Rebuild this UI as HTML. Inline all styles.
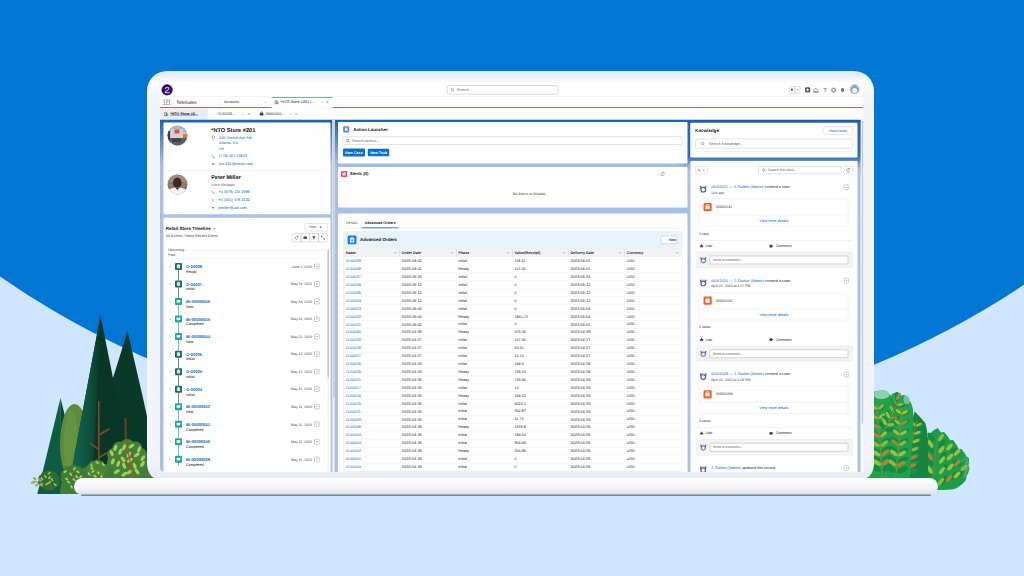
<!DOCTYPE html>
<html><head><meta charset="utf-8">
<style>
*{box-sizing:border-box;margin:0;padding:0}
html,body{width:1024px;height:576px;overflow:hidden;background:#cfe6fe;font-family:"Liberation Sans",sans-serif;text-rendering:geometricPrecision;-webkit-font-smoothing:antialiased;}
.abs{position:absolute}
svg.l{position:absolute;left:0;top:0;width:1024px;height:576px;overflow:visible}
</style></head><body>
<svg class="l" viewBox="0 0 1024 576">
<defs>
<linearGradient id="bezel" x1="0" y1="0" x2="0" y2="1"><stop offset="0" stop-color="#dbe8fa"/><stop offset="0.012" stop-color="#eaf1fc"/><stop offset="0.027" stop-color="#fafbff"/><stop offset="0.07" stop-color="#f2f4fb"/><stop offset="0.95" stop-color="#f2f4fb"/><stop offset="1" stop-color="#e8ebf2"/></linearGradient>
<linearGradient id="base" x1="0" y1="0" x2="0" y2="1"><stop offset="0" stop-color="#ffffff"/><stop offset="0.55" stop-color="#f3f4f8"/><stop offset="0.9" stop-color="#e3e5eb"/><stop offset="1" stop-color="#c9cdd6"/></linearGradient>
</defs>
<rect width="1024" height="576" fill="#cfe6fe"/>
<ellipse cx="518" cy="-308" rx="839" ry="743" fill="#0176d3"/>
<path d="M127.600 331 C134 360 144 400 152 440 L152 494 L100 494 L113 378 Z" fill="#0a3929"/><path d="M60.500 398 L37.300 494 L62 494 Z" fill="#0f5c46"/><path d="M60.500 398 L61.500 494 L84 494 Z" fill="#0b4535"/><ellipse cx="74.500" cy="444" rx="14.500" ry="40" fill="#5e8b3b"/><ellipse cx="71" cy="446" rx="7" ry="36" fill="#6c9a47" opacity="0.55"/><path d="M100.500 315.600 L67.200 494 L140 494 L113 378 Z" fill="#0a3627"/><linearGradient id="t1" gradientUnits="userSpaceOnUse" x1="72" y1="0" x2="100" y2="0"><stop offset="0" stop-color="#15654c"/><stop offset="0.55" stop-color="#0f5440"/><stop offset="1" stop-color="#0a3a2a"/></linearGradient><path d="M100.500 315.600 L67.200 494 L92 494 C94 440 99 370 100.500 315.600 Z" fill="url(#t1)"/><path d="M98.700 401.500 L98.900 462 M99 435 L109 429 M90.700 443.400 L98.700 449.500 M108.200 452 L99 457.700" stroke="#8a4a29" stroke-width="1.500" fill="none" stroke-linecap="round"/><path d="M125.400 418.600 L125.800 442" stroke="#7a3f22" stroke-width="1.800" stroke-linecap="round"/>
<path d="M60 494 C60 480 66 474 76 473 C84 466 92 464 100 466 C108 462 130 462 158 464 L158 494 Z" fill="#437d3a"/><ellipse cx="127.3" cy="459.5" rx="19" ry="18.1" fill="#467f3b"/><circle cx="114.4" cy="455.0" r="7.2" fill="#467f3b"/><circle cx="119.5" cy="448.6" r="7.2" fill="#467f3b"/><circle cx="127.3" cy="446.2" r="7.2" fill="#467f3b"/><circle cx="135.1" cy="448.6" r="7.2" fill="#467f3b"/><circle cx="140.2" cy="455.0" r="7.2" fill="#467f3b"/><circle cx="114.1" cy="462.9" r="7.2" fill="#467f3b"/><circle cx="140.5" cy="462.9" r="7.2" fill="#467f3b"/><path d="M133.0 476.6 L125.4 448.1 M129.6 465.2 L116.8 458.6 M128.2 459.5 L136.8 452.9" stroke="#8f5a2e" stroke-width="1.04" opacity="0.8" fill="none" stroke-linecap="round"/><ellipse cx="124.1" cy="465.7" rx="3.23" ry="1.62" fill="#9fd257" transform="rotate(70 124.1 465.7)"/><ellipse cx="142.5" cy="464.0" rx="3.23" ry="1.62" fill="#9fd257" transform="rotate(-55 142.5 464.0)"/><ellipse cx="123.0" cy="459.3" rx="3.23" ry="1.62" fill="#9fd257" transform="rotate(55 123.0 459.3)"/><ellipse cx="111.7" cy="453.0" rx="3.23" ry="1.62" fill="#9fd257" transform="rotate(70 111.7 453.0)"/><ellipse cx="115.4" cy="447.9" rx="3.23" ry="1.62" fill="#9fd257" transform="rotate(-70 115.4 447.9)"/><ellipse cx="129.7" cy="471.8" rx="3.23" ry="1.62" fill="#9fd257" transform="rotate(-35 129.7 471.8)"/><ellipse cx="134.7" cy="465.9" rx="3.23" ry="1.62" fill="#9fd257" transform="rotate(70 134.7 465.9)"/><ellipse cx="120.3" cy="451.6" rx="3.23" ry="1.62" fill="#9fd257" transform="rotate(-70 120.3 451.6)"/><ellipse cx="124.2" cy="447.2" rx="3.23" ry="1.62" fill="#9fd257" transform="rotate(-70 124.2 447.2)"/><ellipse cx="118.3" cy="463.7" rx="3.23" ry="1.62" fill="#9fd257" transform="rotate(-70 118.3 463.7)"/><ellipse cx="136.8" cy="454.8" rx="3.23" ry="1.62" fill="#9fd257" transform="rotate(-35 136.8 454.8)"/><ellipse cx="131.4" cy="446.1" rx="3.23" ry="1.62" fill="#9fd257" transform="rotate(-35 131.4 446.1)"/><ellipse cx="128.8" cy="454.7" rx="3.23" ry="1.62" fill="#9fd257" transform="rotate(-55 128.8 454.7)"/><ellipse cx="139.1" cy="449.4" rx="3.23" ry="1.62" fill="#9fd257" transform="rotate(-70 139.1 449.4)"/><ellipse cx="116.9" cy="471.7" rx="3.23" ry="1.62" fill="#9fd257" transform="rotate(-35 116.9 471.7)"/><ellipse cx="129.9" cy="460.3" rx="3.23" ry="1.62" fill="#9fd257" transform="rotate(-35 129.9 460.3)"/><ellipse cx="112.8" cy="461.4" rx="3.23" ry="1.62" fill="#9fd257" transform="rotate(-70 112.8 461.4)"/><ellipse cx="137.0" cy="471.6" rx="3.23" ry="1.62" fill="#9fd257" transform="rotate(55 137.0 471.6)"/><ellipse cx="142.8" cy="458.1" rx="3.23" ry="1.62" fill="#9fd257" transform="rotate(-55 142.8 458.1)"/><ellipse cx="124.4" cy="474.2" rx="3.23" ry="1.62" fill="#9fd257" transform="rotate(-35 124.4 474.2)"/><path d="M125.800 441 L133 476" stroke="#9a5a2e" stroke-width="1.200"/><ellipse cx="96.8" cy="470" rx="9.5" ry="9.0" fill="#47863b"/><circle cx="90.4" cy="467.7" r="3.6" fill="#47863b"/><circle cx="92.9" cy="464.6" r="3.6" fill="#47863b"/><circle cx="96.8" cy="463.4" r="3.6" fill="#47863b"/><circle cx="100.7" cy="464.6" r="3.6" fill="#47863b"/><circle cx="103.2" cy="467.7" r="3.6" fill="#47863b"/><circle cx="90.2" cy="471.7" r="3.6" fill="#47863b"/><circle cx="103.4" cy="471.7" r="3.6" fill="#47863b"/><path d="M99.6 478.6 L95.8 464.3 M97.9 472.9 L91.6 469.5 M97.3 470 L101.5 466.7" stroke="#8f5a2e" stroke-width="0.60" opacity="0.8" fill="none" stroke-linecap="round"/><ellipse cx="92.0" cy="468.4" rx="1.90" ry="0.95" fill="#9fd257" transform="rotate(55 92.0 468.4)"/><ellipse cx="103.3" cy="464.5" rx="1.90" ry="0.95" fill="#9fd257" transform="rotate(35 103.3 464.5)"/><ellipse cx="89.1" cy="473.9" rx="1.90" ry="0.95" fill="#9fd257" transform="rotate(55 89.1 473.9)"/><ellipse cx="98.4" cy="472.9" rx="1.90" ry="0.95" fill="#9fd257" transform="rotate(55 98.4 472.9)"/><ellipse cx="91.5" cy="465.3" rx="1.90" ry="0.95" fill="#9fd257" transform="rotate(70 91.5 465.3)"/><ellipse cx="97.3" cy="462.6" rx="1.90" ry="0.95" fill="#9fd257" transform="rotate(35 97.3 462.6)"/><ellipse cx="95.0" cy="476.1" rx="1.90" ry="0.95" fill="#9fd257" transform="rotate(35 95.0 476.1)"/><ellipse cx="93.1" cy="471.4" rx="1.90" ry="0.95" fill="#9fd257" transform="rotate(-35 93.1 471.4)"/><ellipse cx="101.5" cy="476.4" rx="1.90" ry="0.95" fill="#9fd257" transform="rotate(-70 101.5 476.4)"/><ellipse cx="73" cy="477" rx="11.5" ry="10.9" fill="#3f7d37"/><circle cx="65.2" cy="474.2" r="4.4" fill="#3f7d37"/><circle cx="68.3" cy="470.4" r="4.4" fill="#3f7d37"/><circle cx="73.0" cy="468.9" r="4.4" fill="#3f7d37"/><circle cx="77.7" cy="470.4" r="4.4" fill="#3f7d37"/><circle cx="80.8" cy="474.2" r="4.4" fill="#3f7d37"/><circle cx="65.0" cy="479.1" r="4.4" fill="#3f7d37"/><circle cx="81.0" cy="479.1" r="4.4" fill="#3f7d37"/><path d="M76.5 487.4 L71.8 470.1 M74.4 480.4 L66.7 476.4 M73.6 477 L78.8 473.0" stroke="#8f5a2e" stroke-width="0.63" opacity="0.8" fill="none" stroke-linecap="round"/><ellipse cx="74.2" cy="479.7" rx="1.96" ry="0.98" fill="#a4d65e" transform="rotate(35 74.2 479.7)"/><ellipse cx="80.6" cy="476.7" rx="1.96" ry="0.98" fill="#a4d65e" transform="rotate(-35 80.6 476.7)"/><ellipse cx="70.8" cy="474.2" rx="1.96" ry="0.98" fill="#a4d65e" transform="rotate(55 70.8 474.2)"/><ellipse cx="76.7" cy="476.8" rx="1.96" ry="0.98" fill="#a4d65e" transform="rotate(55 76.7 476.8)"/><ellipse cx="66.7" cy="479.0" rx="1.96" ry="0.98" fill="#a4d65e" transform="rotate(35 66.7 479.0)"/><ellipse cx="65.2" cy="471.6" rx="1.96" ry="0.98" fill="#a4d65e" transform="rotate(-35 65.2 471.6)"/><ellipse cx="77.8" cy="471.9" rx="1.96" ry="0.98" fill="#a4d65e" transform="rotate(35 77.8 471.9)"/><ellipse cx="74.4" cy="468.8" rx="1.96" ry="0.98" fill="#a4d65e" transform="rotate(-55 74.4 468.8)"/><ellipse cx="79.5" cy="481.8" rx="1.96" ry="0.98" fill="#a4d65e" transform="rotate(-70 79.5 481.8)"/><ellipse cx="71.6" cy="486.9" rx="1.96" ry="0.98" fill="#a4d65e" transform="rotate(70 71.6 486.9)"/><ellipse cx="68.7" cy="482.2" rx="1.96" ry="0.98" fill="#a4d65e" transform="rotate(35 68.7 482.2)"/><ellipse cx="49" cy="481" rx="10" ry="9.5" fill="#2f6b36"/><circle cx="42.2" cy="478.6" r="3.8" fill="#2f6b36"/><circle cx="44.9" cy="475.3" r="3.8" fill="#2f6b36"/><circle cx="49.0" cy="474.0" r="3.8" fill="#2f6b36"/><circle cx="53.1" cy="475.3" r="3.8" fill="#2f6b36"/><circle cx="55.8" cy="478.6" r="3.8" fill="#2f6b36"/><circle cx="42.0" cy="482.8" r="3.8" fill="#2f6b36"/><circle cx="56.0" cy="482.8" r="3.8" fill="#2f6b36"/><path d="M52.0 490.0 L48.0 475.0 M50.2 484.0 L43.5 480.5 M49.5 481 L54.0 477.5" stroke="#8f5a2e" stroke-width="0.60" opacity="0.8" fill="none" stroke-linecap="round"/><ellipse cx="45.4" cy="476.6" rx="1.90" ry="0.95" fill="#8fc652" transform="rotate(55 45.4 476.6)"/><ellipse cx="49.5" cy="482.4" rx="1.90" ry="0.95" fill="#8fc652" transform="rotate(-35 49.5 482.4)"/><ellipse cx="41.6" cy="484.7" rx="1.90" ry="0.95" fill="#8fc652" transform="rotate(55 41.6 484.7)"/><ellipse cx="49.5" cy="477.6" rx="1.90" ry="0.95" fill="#8fc652" transform="rotate(-55 49.5 477.6)"/><ellipse cx="42.0" cy="478.8" rx="1.90" ry="0.95" fill="#8fc652" transform="rotate(55 42.0 478.8)"/><ellipse cx="55.2" cy="484.7" rx="1.90" ry="0.95" fill="#8fc652" transform="rotate(35 55.2 484.7)"/><ellipse cx="46.7" cy="484.0" rx="1.90" ry="0.95" fill="#8fc652" transform="rotate(-35 46.7 484.0)"/><ellipse cx="52.0" cy="479.6" rx="1.90" ry="0.95" fill="#8fc652" transform="rotate(55 52.0 479.6)"/><ellipse cx="49.2" cy="473.2" rx="1.90" ry="0.95" fill="#8fc652" transform="rotate(-35 49.2 473.2)"/><path d="M33 481 L45 484" stroke="#7a5a30" stroke-width="0.7"/><ellipse cx="34.8" cy="478.7" rx="2.300" ry="1.100" fill="#86b85a" transform="rotate(30 34.8 478.7)"/><ellipse cx="32.9" cy="482.6" rx="2.300" ry="1.100" fill="#86b85a" transform="rotate(-10 32.9 482.6)"/><ellipse cx="36.7" cy="485" rx="2.300" ry="1.100" fill="#86b85a" transform="rotate(-35 36.7 485)"/><ellipse cx="40" cy="480" rx="2.300" ry="1.100" fill="#86b85a" transform="rotate(40 40 480)"/><ellipse cx="41" cy="484.5" rx="2.300" ry="1.100" fill="#86b85a" transform="rotate(-30 41 484.5)"/>
<path d="M925 489 L926 440 C928 435 933 430 937.700 428 L941 432.500 L944 432 C947 435 949 438 950.200 440.300 L953 440 C955.500 443 957.500 446 958.700 449 L961.500 449 C963.500 451.500 965.500 454 966.400 456.600 L969 458 C969.300 460.500 969 463 968.300 465 L969.500 468 C969 471 968 474 966.400 476.600 L966 480 C964 482.500 962 484.500 959.700 486 L956 488.500 C953 489.500 951 489.500 950 489.500 C940 490.500 932 490 925 489 Z" fill="#1f9c49"/><path d="M966 458 l3 0.500 l-1 3 l2 2 l-1.500 3 l1 3 l-2.500 3 l0 3 l-4 3 z" fill="#5bb98a" opacity="0.5"/><ellipse cx="931.0" cy="437.0" rx="5.00" ry="2.30" fill="#178a42" transform="rotate(55 931.0 437.0)"/><ellipse cx="930.0" cy="449.0" rx="5.00" ry="2.30" fill="#178a42" transform="rotate(55 930.0 449.0)"/><ellipse cx="930.0" cy="462.0" rx="5.00" ry="2.30" fill="#178a42" transform="rotate(55 930.0 462.0)"/><ellipse cx="931.0" cy="476.0" rx="5.00" ry="2.30" fill="#178a42" transform="rotate(55 931.0 476.0)"/><ellipse cx="942.0" cy="444.0" rx="5.00" ry="2.30" fill="#178a42" transform="rotate(-55 942.0 444.0)"/><ellipse cx="943.0" cy="456.0" rx="5.00" ry="2.30" fill="#178a42" transform="rotate(-55 943.0 456.0)"/><ellipse cx="944.0" cy="468.0" rx="5.00" ry="2.30" fill="#178a42" transform="rotate(-55 944.0 468.0)"/><ellipse cx="944.0" cy="480.0" rx="5.00" ry="2.30" fill="#178a42" transform="rotate(-55 944.0 480.0)"/><ellipse cx="953.0" cy="452.0" rx="5.00" ry="2.30" fill="#178a42" transform="rotate(-55 953.0 452.0)"/><ellipse cx="954.0" cy="464.0" rx="5.00" ry="2.30" fill="#178a42" transform="rotate(-55 954.0 464.0)"/><ellipse cx="954.0" cy="476.0" rx="5.00" ry="2.30" fill="#178a42" transform="rotate(-55 954.0 476.0)"/><ellipse cx="961.0" cy="462.0" rx="5.00" ry="2.30" fill="#178a42" transform="rotate(-55 961.0 462.0)"/><ellipse cx="961.0" cy="473.0" rx="5.00" ry="2.30" fill="#178a42" transform="rotate(-55 961.0 473.0)"/><path d="M933 480 L936.800 438" stroke="#7d8a35" stroke-width="0.9" fill="none"/><ellipse cx="930.5" cy="444.0" rx="4.30" ry="1.90" fill="#97c23f" transform="rotate(60 930.5 444.0)"/><ellipse cx="930.0" cy="456.5" rx="4.30" ry="1.90" fill="#a8873b" transform="rotate(60 930.0 456.5)"/><ellipse cx="930.0" cy="470.0" rx="4.30" ry="1.90" fill="#97c23f" transform="rotate(60 930.0 470.0)"/><ellipse cx="931.0" cy="483.0" rx="4.30" ry="1.90" fill="#8aba3d" transform="rotate(60 931.0 483.0)"/><ellipse cx="941.0" cy="437.5" rx="4.30" ry="1.90" fill="#8aba3d" transform="rotate(-55 941.0 437.5)"/><ellipse cx="941.5" cy="449.5" rx="4.30" ry="1.90" fill="#97c23f" transform="rotate(-55 941.5 449.5)"/><ellipse cx="942.0" cy="460.0" rx="4.30" ry="1.90" fill="#97c23f" transform="rotate(-55 942.0 460.0)"/><ellipse cx="942.0" cy="470.5" rx="4.30" ry="1.90" fill="#97c23f" transform="rotate(-55 942.0 470.5)"/><ellipse cx="941.0" cy="481.5" rx="4.30" ry="1.90" fill="#8aba3d" transform="rotate(-55 941.0 481.5)"/><ellipse cx="949.5" cy="447.0" rx="4.30" ry="1.90" fill="#97c23f" transform="rotate(-50 949.5 447.0)"/><ellipse cx="950.0" cy="457.0" rx="4.30" ry="1.90" fill="#97c23f" transform="rotate(-50 950.0 457.0)"/><ellipse cx="950.5" cy="467.0" rx="4.30" ry="1.90" fill="#97c23f" transform="rotate(-50 950.5 467.0)"/><ellipse cx="949.0" cy="478.5" rx="4.30" ry="1.90" fill="#a8873b" transform="rotate(-50 949.0 478.5)"/><ellipse cx="957.0" cy="452.5" rx="4.30" ry="1.90" fill="#97c23f" transform="rotate(-45 957.0 452.5)"/><ellipse cx="957.5" cy="463.0" rx="4.30" ry="1.90" fill="#a8873b" transform="rotate(-45 957.5 463.0)"/><ellipse cx="957.0" cy="475.0" rx="4.30" ry="1.90" fill="#97c23f" transform="rotate(-45 957.0 475.0)"/><ellipse cx="963.5" cy="459.5" rx="4.30" ry="1.90" fill="#2aa556" transform="rotate(-40 963.5 459.5)"/><ellipse cx="964.0" cy="468.0" rx="4.30" ry="1.90" fill="#8aba3d" transform="rotate(-40 964.0 468.0)"/><path d="M900 480 C904 452 909 428 914.800 411.500 C918 415 922 419 925.300 423.200 C927.500 429 928 440 928 450 L928 480 Z" fill="#17853f"/><ellipse cx="901.7" cy="469.0" rx="5.73" ry="2.58" fill="#1b9447" transform="rotate(-139 901.7 469.0)"/><ellipse cx="912.4" cy="471.2" rx="5.73" ry="2.58" fill="#1b9447" transform="rotate(-19 912.4 471.2)"/><ellipse cx="903.5" cy="461.5" rx="5.43" ry="2.44" fill="#1b9447" transform="rotate(-139 903.5 461.5)"/><ellipse cx="913.6" cy="463.5" rx="5.43" ry="2.44" fill="#1b9447" transform="rotate(-19 913.6 463.5)"/><ellipse cx="905.3" cy="454.0" rx="5.12" ry="2.30" fill="#1b9447" transform="rotate(-139 905.3 454.0)"/><ellipse cx="914.8" cy="455.9" rx="5.12" ry="2.30" fill="#1b9447" transform="rotate(-19 914.8 455.9)"/><ellipse cx="907.1" cy="446.5" rx="4.82" ry="2.17" fill="#1b9447" transform="rotate(-139 907.1 446.5)"/><ellipse cx="916.1" cy="448.3" rx="4.82" ry="2.17" fill="#1b9447" transform="rotate(-19 916.1 448.3)"/><ellipse cx="908.9" cy="439.0" rx="4.51" ry="2.03" fill="#1b9447" transform="rotate(-139 908.9 439.0)"/><ellipse cx="917.3" cy="440.7" rx="4.51" ry="2.03" fill="#1b9447" transform="rotate(-19 917.3 440.7)"/><ellipse cx="910.7" cy="431.5" rx="4.21" ry="1.89" fill="#1b9447" transform="rotate(-139 910.7 431.5)"/><ellipse cx="918.6" cy="433.1" rx="4.21" ry="1.89" fill="#1b9447" transform="rotate(-19 918.6 433.1)"/><ellipse cx="912.5" cy="424.0" rx="3.90" ry="1.76" fill="#1b9447" transform="rotate(-139 912.5 424.0)"/><ellipse cx="919.8" cy="425.5" rx="3.90" ry="1.76" fill="#1b9447" transform="rotate(-19 919.8 425.5)"/><path d="M905 478 L916.5 421" stroke="#8e8a35" stroke-width="0.9" fill="none" stroke-linecap="round"/><ellipse cx="903.5" cy="464.1" rx="4.48" ry="1.88" fill="#97c23f" transform="rotate(-134 903.5 464.1)"/><ellipse cx="911.8" cy="465.8" rx="4.48" ry="1.88" fill="#a8873b" transform="rotate(-24 911.8 465.8)"/><ellipse cx="905.4" cy="455.9" rx="4.21" ry="1.77" fill="#97c23f" transform="rotate(-134 905.4 455.9)"/><ellipse cx="913.2" cy="457.5" rx="4.21" ry="1.77" fill="#a8873b" transform="rotate(-24 913.2 457.5)"/><ellipse cx="907.3" cy="447.8" rx="3.95" ry="1.66" fill="#8aba3d" transform="rotate(-134 907.3 447.8)"/><ellipse cx="914.6" cy="449.3" rx="3.95" ry="1.66" fill="#8aba3d" transform="rotate(-24 914.6 449.3)"/><ellipse cx="909.2" cy="439.7" rx="3.69" ry="1.55" fill="#a8873b" transform="rotate(-134 909.2 439.7)"/><ellipse cx="916.0" cy="441.0" rx="3.69" ry="1.55" fill="#97c23f" transform="rotate(-24 916.0 441.0)"/><ellipse cx="911.1" cy="431.5" rx="3.42" ry="1.44" fill="#a8873b" transform="rotate(-134 911.1 431.5)"/><ellipse cx="917.4" cy="432.8" rx="3.42" ry="1.44" fill="#97c23f" transform="rotate(-24 917.4 432.8)"/><ellipse cx="913.0" cy="423.4" rx="3.16" ry="1.33" fill="#8aba3d" transform="rotate(-134 913.0 423.4)"/><ellipse cx="918.8" cy="424.6" rx="3.16" ry="1.33" fill="#97c23f" transform="rotate(-24 918.8 424.6)"/><path d="M858 480 L858 398 C866 393 878 390.500 882.400 390 C886 390.300 889 392.500 891 396 C893 393.500 895.500 392 897.700 391.700 L900.500 395.500 L904 395 C906 395.500 907.500 396.500 908.200 397.400 C910.500 401 912.300 405 913 409.800 C914 420 912 450 910 480 Z" fill="#22a04c"/><path d="M897.700 391.700 C899.500 397 899 404 896 410 L890.500 399 C892.500 395.500 895 393 897.700 391.700Z" fill="#178a41"/><ellipse cx="875.6" cy="468.1" rx="6.26" ry="2.82" fill="#178a42" transform="rotate(-154 875.6 468.1)"/><ellipse cx="887.5" cy="467.3" rx="6.26" ry="2.82" fill="#178a42" transform="rotate(-34 887.5 467.3)"/><ellipse cx="875.3" cy="459.5" rx="6.03" ry="2.71" fill="#178a42" transform="rotate(-154 875.3 459.5)"/><ellipse cx="886.7" cy="458.7" rx="6.03" ry="2.71" fill="#178a42" transform="rotate(-34 886.7 458.7)"/><ellipse cx="874.9" cy="450.9" rx="5.79" ry="2.61" fill="#178a42" transform="rotate(-154 874.9 450.9)"/><ellipse cx="885.9" cy="450.2" rx="5.79" ry="2.61" fill="#178a42" transform="rotate(-34 885.9 450.2)"/><ellipse cx="874.6" cy="442.4" rx="5.56" ry="2.50" fill="#178a42" transform="rotate(-154 874.6 442.4)"/><ellipse cx="885.1" cy="441.7" rx="5.56" ry="2.50" fill="#178a42" transform="rotate(-34 885.1 441.7)"/><ellipse cx="874.2" cy="433.8" rx="5.32" ry="2.39" fill="#178a42" transform="rotate(-154 874.2 433.8)"/><ellipse cx="884.3" cy="433.1" rx="5.32" ry="2.39" fill="#178a42" transform="rotate(-34 884.3 433.1)"/><ellipse cx="873.8" cy="425.2" rx="5.09" ry="2.29" fill="#178a42" transform="rotate(-154 873.8 425.2)"/><ellipse cx="883.5" cy="424.6" rx="5.09" ry="2.29" fill="#178a42" transform="rotate(-34 883.5 424.6)"/><ellipse cx="873.5" cy="416.7" rx="4.85" ry="2.18" fill="#178a42" transform="rotate(-154 873.5 416.7)"/><ellipse cx="882.7" cy="416.0" rx="4.85" ry="2.18" fill="#178a42" transform="rotate(-34 882.7 416.0)"/><ellipse cx="873.1" cy="408.1" rx="4.62" ry="2.08" fill="#178a42" transform="rotate(-154 873.1 408.1)"/><ellipse cx="881.9" cy="407.5" rx="4.62" ry="2.08" fill="#178a42" transform="rotate(-34 881.9 407.5)"/><path d="M882.4 478 L877.4 404" stroke="#8e8a35" stroke-width="0.9" fill="none" stroke-linecap="round"/><ellipse cx="876.7" cy="462.5" rx="4.93" ry="2.07" fill="#97c23f" transform="rotate(-149 876.7 462.5)"/><ellipse cx="886.0" cy="461.8" rx="4.93" ry="2.07" fill="#a8873b" transform="rotate(-39 886.0 461.8)"/><ellipse cx="876.3" cy="453.3" rx="4.73" ry="1.99" fill="#97c23f" transform="rotate(-149 876.3 453.3)"/><ellipse cx="885.2" cy="452.7" rx="4.73" ry="1.99" fill="#a8873b" transform="rotate(-39 885.2 452.7)"/><ellipse cx="875.8" cy="444.1" rx="4.53" ry="1.90" fill="#8aba3d" transform="rotate(-149 875.8 444.1)"/><ellipse cx="884.3" cy="443.5" rx="4.53" ry="1.90" fill="#8aba3d" transform="rotate(-39 884.3 443.5)"/><ellipse cx="875.4" cy="434.9" rx="4.32" ry="1.82" fill="#a8873b" transform="rotate(-149 875.4 434.9)"/><ellipse cx="883.5" cy="434.4" rx="4.32" ry="1.82" fill="#97c23f" transform="rotate(-39 883.5 434.4)"/><ellipse cx="875.0" cy="425.7" rx="4.12" ry="1.73" fill="#a8873b" transform="rotate(-149 875.0 425.7)"/><ellipse cx="882.7" cy="425.2" rx="4.12" ry="1.73" fill="#97c23f" transform="rotate(-39 882.7 425.2)"/><ellipse cx="874.5" cy="416.6" rx="3.92" ry="1.65" fill="#8aba3d" transform="rotate(-149 874.5 416.6)"/><ellipse cx="881.9" cy="416.1" rx="3.92" ry="1.65" fill="#97c23f" transform="rotate(-39 881.9 416.1)"/><ellipse cx="874.1" cy="407.4" rx="3.72" ry="1.56" fill="#97c23f" transform="rotate(-149 874.1 407.4)"/><ellipse cx="881.1" cy="406.9" rx="3.72" ry="1.56" fill="#8aba3d" transform="rotate(-39 881.1 406.9)"/><ellipse cx="882.2" cy="425.5" rx="4.88" ry="2.19" fill="#178a42" transform="rotate(-123 882.2 425.5)"/><ellipse cx="890.4" cy="429.7" rx="4.88" ry="2.19" fill="#178a42" transform="rotate(-3 890.4 429.7)"/><ellipse cx="885.4" cy="419.7" rx="4.62" ry="2.08" fill="#178a42" transform="rotate(-123 885.4 419.7)"/><ellipse cx="893.2" cy="423.7" rx="4.62" ry="2.08" fill="#178a42" transform="rotate(-3 893.2 423.7)"/><ellipse cx="888.6" cy="414.0" rx="4.38" ry="1.97" fill="#178a42" transform="rotate(-123 888.6 414.0)"/><ellipse cx="896.0" cy="417.7" rx="4.38" ry="1.97" fill="#178a42" transform="rotate(-3 896.0 417.7)"/><ellipse cx="891.8" cy="408.2" rx="4.12" ry="1.86" fill="#178a42" transform="rotate(-123 891.8 408.2)"/><ellipse cx="898.8" cy="411.8" rx="4.12" ry="1.86" fill="#178a42" transform="rotate(-3 898.8 411.8)"/><ellipse cx="895.0" cy="402.4" rx="3.88" ry="1.74" fill="#178a42" transform="rotate(-123 895.0 402.4)"/><ellipse cx="901.5" cy="405.8" rx="3.88" ry="1.74" fill="#178a42" transform="rotate(-3 901.5 405.8)"/><path d="M880.5 437 L898.8 401" stroke="#8e8a35" stroke-width="0.9" fill="none" stroke-linecap="round"/><ellipse cx="884.4" cy="421.4" rx="3.81" ry="1.60" fill="#97c23f" transform="rotate(-118 884.4 421.4)"/><ellipse cx="890.8" cy="424.7" rx="3.81" ry="1.60" fill="#8aba3d" transform="rotate(-8 890.8 424.7)"/><ellipse cx="887.9" cy="414.9" rx="3.58" ry="1.51" fill="#97c23f" transform="rotate(-118 887.9 414.9)"/><ellipse cx="894.0" cy="418.0" rx="3.58" ry="1.51" fill="#a8873b" transform="rotate(-8 894.0 418.0)"/><ellipse cx="891.5" cy="408.4" rx="3.36" ry="1.41" fill="#8aba3d" transform="rotate(-118 891.5 408.4)"/><ellipse cx="897.1" cy="411.3" rx="3.36" ry="1.41" fill="#97c23f" transform="rotate(-8 897.1 411.3)"/><ellipse cx="895.0" cy="401.9" rx="3.13" ry="1.32" fill="#a8873b" transform="rotate(-118 895.0 401.9)"/><ellipse cx="900.3" cy="404.5" rx="3.13" ry="1.32" fill="#97c23f" transform="rotate(-8 900.3 404.5)"/><ellipse cx="890.9" cy="468.9" rx="6.03" ry="2.71" fill="#178a42" transform="rotate(-145 890.9 468.9)"/><ellipse cx="902.3" cy="469.9" rx="6.03" ry="2.71" fill="#178a42" transform="rotate(-25 902.3 469.9)"/><ellipse cx="892.0" cy="459.4" rx="5.73" ry="2.58" fill="#178a42" transform="rotate(-145 892.0 459.4)"/><ellipse cx="902.9" cy="460.4" rx="5.73" ry="2.58" fill="#178a42" transform="rotate(-25 902.9 460.4)"/><ellipse cx="893.2" cy="450.0" rx="5.44" ry="2.45" fill="#178a42" transform="rotate(-145 893.2 450.0)"/><ellipse cx="903.5" cy="450.9" rx="5.44" ry="2.45" fill="#178a42" transform="rotate(-25 903.5 450.9)"/><ellipse cx="894.3" cy="440.5" rx="5.15" ry="2.32" fill="#178a42" transform="rotate(-145 894.3 440.5)"/><ellipse cx="904.1" cy="441.4" rx="5.15" ry="2.32" fill="#178a42" transform="rotate(-25 904.1 441.4)"/><ellipse cx="895.4" cy="431.0" rx="4.86" ry="2.19" fill="#178a42" transform="rotate(-145 895.4 431.0)"/><ellipse cx="904.7" cy="431.9" rx="4.86" ry="2.19" fill="#178a42" transform="rotate(-25 904.7 431.9)"/><ellipse cx="896.6" cy="421.6" rx="4.56" ry="2.05" fill="#178a42" transform="rotate(-145 896.6 421.6)"/><ellipse cx="905.2" cy="422.4" rx="4.56" ry="2.05" fill="#178a42" transform="rotate(-25 905.2 422.4)"/><ellipse cx="897.7" cy="412.1" rx="4.27" ry="1.92" fill="#178a42" transform="rotate(-145 897.7 412.1)"/><ellipse cx="905.8" cy="412.9" rx="4.27" ry="1.92" fill="#178a42" transform="rotate(-25 905.8 412.9)"/><path d="M896 474 L902 408" stroke="#8e8a35" stroke-width="0.9" fill="none" stroke-linecap="round"/><ellipse cx="892.5" cy="463.0" rx="4.72" ry="1.98" fill="#8aba3d" transform="rotate(-140 892.5 463.0)"/><ellipse cx="901.4" cy="463.8" rx="4.72" ry="1.98" fill="#a8873b" transform="rotate(-30 901.4 463.8)"/><ellipse cx="893.7" cy="452.8" rx="4.47" ry="1.88" fill="#97c23f" transform="rotate(-140 893.7 452.8)"/><ellipse cx="902.1" cy="453.5" rx="4.47" ry="1.88" fill="#97c23f" transform="rotate(-30 902.1 453.5)"/><ellipse cx="894.9" cy="442.5" rx="4.21" ry="1.77" fill="#a8873b" transform="rotate(-140 894.9 442.5)"/><ellipse cx="902.8" cy="443.2" rx="4.21" ry="1.77" fill="#8aba3d" transform="rotate(-30 902.8 443.2)"/><ellipse cx="896.1" cy="432.2" rx="3.96" ry="1.66" fill="#97c23f" transform="rotate(-140 896.1 432.2)"/><ellipse cx="903.5" cy="432.9" rx="3.96" ry="1.66" fill="#97c23f" transform="rotate(-30 903.5 432.9)"/><ellipse cx="897.2" cy="422.0" rx="3.71" ry="1.56" fill="#8aba3d" transform="rotate(-140 897.2 422.0)"/><ellipse cx="904.2" cy="422.6" rx="3.71" ry="1.56" fill="#a8873b" transform="rotate(-30 904.2 422.6)"/><ellipse cx="898.4" cy="411.7" rx="3.45" ry="1.45" fill="#97c23f" transform="rotate(-140 898.4 411.7)"/><ellipse cx="904.9" cy="412.3" rx="3.45" ry="1.45" fill="#97c23f" transform="rotate(-30 904.9 412.3)"/><ellipse cx="881.500" cy="394.500" rx="8" ry="4.600" fill="#a8dccb" opacity="0.8"/><ellipse cx="907" cy="399.500" rx="3.500" ry="4.500" fill="#a8dccb" opacity="0.6"/><ellipse cx="898.5" cy="396.5" rx="4.00" ry="1.60" fill="#a8873b" transform="rotate(-62 898.5 396.5)"/><ellipse cx="893.5" cy="398.0" rx="4.50" ry="1.80" fill="#27a552" transform="rotate(-100 893.5 398.0)"/>
<path d="M147 463 V91 a20 20 0 0 1 20 -20 H854 a20 20 0 0 1 20 20 V463 a10 15.500 0 0 1 -10 15.500 H157 a10 15.500 0 0 1 -10 -15.500 Z" fill="url(#bezel)"/>
<rect x="74" y="478" width="864" height="17" rx="8.500" fill="url(#base)"/>
<rect x="81" y="494.500" width="850" height="1.500" rx="0.7" fill="#6f7885" opacity="0.85"/>
</svg>
<div class="abs" style="left:160px;top:82px;width:703.2px;height:390px;background:#fff"></div>
<div class="abs" style="left:0;top:0;width:1024px;height:576px;filter:blur(0.3px)"><div class="abs" style="left:0;top:0;width:4096px;height:2304px;transform:scale(0.25);transform-origin:0 0;clip-path:inset(328px 643.2px 416px 640px)">
<div class="abs" style="left:640.00px;top:328.00px;width:2812.00px;height:57.60px;background:#fff"></div>
<div class="abs" style="left:640.00px;top:384.80px;width:2812.00px;height:2.40px;background:#e3e3e3"></div>
<div class="abs" style="left:1787.60px;top:340.80px;width:445.20px;height:36.80px;border:2.80px solid #b9b9b9;border-radius:6.00px;background:#fff"></div>
<div class="abs" style="top:350.48px;font-size:15.20px;line-height:18.24px;color:#666;white-space:nowrap;left:1826.00px;">Search...</div>
<div class="abs" style="left:3156.00px;top:345.20px;width:44.80px;height:28.80px;border:2.40px solid #c4c4c4;border-radius:4.80px;background:#fff"></div>
<div class="abs" style="left:3178.40px;top:345.20px;width:2.40px;height:28.80px;background:#c4c4c4"></div>
<div class="abs" style="top:345.68px;font-size:23.20px;line-height:27.84px;color:#777;white-space:nowrap;font-weight:bold;left:2899.60px;width:800px;text-align:center;">?</div>
<div class="abs" style="left:640.00px;top:387.20px;width:2812.00px;height:40.80px;background:#fff"></div>
<div class="abs" style="left:640.00px;top:428.00px;width:2812.00px;height:3.60px;background:#4a87cf"></div>
<div class="abs" style="top:396.72px;font-size:18.80px;line-height:22.56px;color:#111;white-space:nowrap;left:704.80px;">TeleSales</div>
<div class="abs" style="left:882.40px;top:392.80px;width:2.00px;height:32.00px;background:#e6e6e6"></div>
<div class="abs" style="top:399.12px;font-size:14.80px;line-height:17.76px;color:#222;white-space:nowrap;left:895.60px;">Accounts</div>
<div class="abs" style="left:1042.00px;top:392.80px;width:2.00px;height:32.00px;background:#e6e6e6"></div>
<div class="abs" style="left:1086.00px;top:387.60px;width:245.20px;height:44.80px;background:#fff;border-top:3.60px solid #4a87cf"></div>
<div class="abs" style="top:399.68px;font-size:15.20px;line-height:18.24px;color:#111;white-space:nowrap;left:1120.00px;">*NTO Store #201 |...</div>
<div class="abs" style="left:640.00px;top:432.00px;width:2812.00px;height:47.20px;background:#fff"></div>
<div class="abs" style="left:640.00px;top:432.00px;width:190.80px;height:47.20px;background:#e6eef8"></div>
<div class="abs" style="top:447.52px;font-size:14.80px;line-height:17.76px;color:#111;white-space:nowrap;font-weight:bold;left:680.00px;text-decoration:underline;">*NTO Store #2...</div>
<div class="abs" style="top:447.52px;font-size:14.80px;line-height:17.76px;color:#333;white-space:nowrap;left:870.80px;">O-00038...</div>
<div class="abs" style="top:447.52px;font-size:14.80px;line-height:17.76px;color:#222;white-space:nowrap;left:1062.80px;">00001011...</div>
<div class="abs" style="left:640.00px;top:479.20px;width:2803.20px;height:1408.80px;background:linear-gradient(180deg,#225ca6 0.00px,#2d68b0 12.00px,#4a7dbf 56.00px,#7399d0 112.00px,#a2bbe0 176.00px,#aac1e3 208.00px,#aac1e3 100%)"></div>
<div class="abs" style="left:2704px;top:479.2px;width:739.2px;height:224px;background:linear-gradient(180deg,#225ca6 0px,#2b66ae 24px,#316ab1 144px,#5c88c6 164px,#98b3dc 188px,#aac1e3 208px);-webkit-mask-image:linear-gradient(90deg,transparent 0,#000 44px);mask-image:linear-gradient(90deg,transparent 0,#000 44px)"></div>
<div class="abs" style="left:3443.20px;top:479.20px;width:9.60px;height:1408.80px;background:#fafbfe"></div>
<div class="abs" style="left:3446.80px;top:482.00px;width:5.20px;height:1212.00px;background:#bcc0cb;border-radius:2.40px"></div>
<div class="abs" style="left:1328.80px;top:479.20px;width:11.60px;height:1408.80px;background:#eef1f6"></div>
<div class="abs" style="left:1338.00px;top:479.20px;width:2.00px;height:1408.80px;background:#c9ced8"></div>
<div class="abs" style="left:1328.80px;top:479.20px;width:1.60px;height:1408.80px;background:#d5dae3"></div>
<div class="abs" style="left:1333.20px;top:482.00px;width:4.80px;height:1108.00px;background:#c4c6cb;border-radius:2.40px"></div>
<div class="abs" style="left:653.60px;top:489.60px;width:668.80px;height:367.60px;background:#fff;border-radius:4.80px;"></div>
<div class="abs" style="left:670.00px;top:679.60px;width:634.00px;height:2.00px;background:#e5e5e5"></div>
<div class="abs" style="top:504.84px;font-size:22.60px;line-height:27.12px;color:#111;white-space:nowrap;font-weight:bold;left:844.80px;">*NTO Store #201</div>
<div class="abs" style="top:542.32px;font-size:14.80px;line-height:17.76px;color:#0b66c0;white-space:nowrap;left:876.00px;">235 Central Ave SW</div>
<div class="abs" style="top:565.12px;font-size:14.80px;line-height:17.76px;color:#0b66c0;white-space:nowrap;left:876.00px;">Atlanta, GA</div>
<div class="abs" style="top:587.60px;font-size:14.00px;line-height:16.80px;color:#0b66c0;white-space:nowrap;left:876.00px;">US</div>
<div class="abs" style="top:616.08px;font-size:15.20px;line-height:18.24px;color:#0b66c0;white-space:nowrap;left:876.00px;">(770) 407-10643</div>
<div class="abs" style="top:646.88px;font-size:15.20px;line-height:18.24px;color:#0b66c0;white-space:nowrap;left:876.00px;">nto.201@email.com</div>
<div class="abs" style="top:697.20px;font-size:22.00px;line-height:26.40px;color:#111;white-space:nowrap;font-weight:bold;left:844.80px;">Peter Miller</div>
<div class="abs" style="top:730.56px;font-size:14.40px;line-height:17.28px;color:#666;white-space:nowrap;left:844.80px;">Store Manager</div>
<div class="abs" style="top:759.28px;font-size:15.20px;line-height:18.24px;color:#0b66c0;white-space:nowrap;left:874.40px;">+1 (678) 124-2086</div>
<div class="abs" style="top:790.88px;font-size:15.20px;line-height:18.24px;color:#0b66c0;white-space:nowrap;left:874.40px;">+1 (401) 578-2122</div>
<div class="abs" style="top:820.88px;font-size:15.20px;line-height:18.24px;color:#0b66c0;white-space:nowrap;left:874.40px;">pmiller@aol.com</div>
<div class="abs" style="left:653.60px;top:871.20px;width:668.80px;height:1016.80px;background:#fff;border-radius:4.80px;border-bottom-left-radius:0;border-bottom-right-radius:0;"></div>
<div class="abs" style="top:904.68px;font-size:18.20px;line-height:21.84px;color:#111;white-space:nowrap;font-weight:bold;left:663.20px;">Retail Store Timeline</div>
<div class="abs" style="top:932.60px;font-size:15.00px;line-height:18.00px;color:#444;white-space:nowrap;left:663.20px;">All Events • Most Recent Event</div>
<div class="abs" style="left:1217.60px;top:893.20px;width:92.40px;height:31.60px;border:2.40px solid #c9c9c9;border-radius:4.80px;background:#fff"></div>
<div class="abs" style="top:900.96px;font-size:14.40px;line-height:17.28px;color:#0b66c0;white-space:nowrap;left:1236.80px;">New</div>
<div class="abs" style="left:1168.00px;top:933.20px;width:142.00px;height:34.40px;border:2.40px solid #c4c4c4;border-radius:4.80px;background:#fff"></div>
<div class="abs" style="left:1203.20px;top:933.20px;width:2.40px;height:34.40px;background:#bdbdbd"></div>
<div class="abs" style="left:1238.00px;top:933.20px;width:2.40px;height:34.40px;background:#bdbdbd"></div>
<div class="abs" style="left:1273.20px;top:933.20px;width:2.40px;height:34.40px;background:#bdbdbd"></div>
<div class="abs" style="top:992.16px;font-size:14.40px;line-height:17.28px;color:#444;white-space:nowrap;left:672.00px;">Upcoming</div>
<div class="abs" style="left:744.00px;top:1001.20px;width:560.00px;height:1.60px;background:#e2e2e2"></div>
<div class="abs" style="top:1012.96px;font-size:14.40px;line-height:17.28px;color:#444;white-space:nowrap;left:672.00px;">Past</div>
<div class="abs" style="left:704.00px;top:1033.20px;width:600.00px;height:1.60px;background:#ececec"></div>
<div class="abs" style="left:1310.40px;top:996.00px;width:5.20px;height:892.00px;background:#f1f1f1"></div>
<div class="abs" style="left:1310.40px;top:998.00px;width:5.20px;height:512.00px;background:#c1c1c1;border-radius:2.40px"></div>
<div class="abs" style="left:712.60px;top:1079.60px;width:3.00px;height:42.92px;background:#3d6e60"></div>
<div class="abs" style="top:1056.44px;font-size:16.60px;line-height:19.92px;color:#1467c2;white-space:nowrap;font-weight:bold;left:744.00px;">O-00038</div>
<div class="abs" style="top:1078.84px;font-size:14.60px;line-height:17.52px;color:#000;white-space:nowrap;left:744.00px;">Ready</div>
<div class="abs" style="top:1057.60px;font-size:14.00px;line-height:16.80px;color:#444;white-space:nowrap;right:2848.00px;">June 1, 2023</div>
<div class="abs" style="left:1257.20px;top:1055.20px;width:21.20px;height:21.20px;border:2.00px solid #999;border-radius:3.60px;background:#fff"></div>
<div class="abs" style="left:712.60px;top:1149.72px;width:3.00px;height:42.92px;background:#3d6e60"></div>
<div class="abs" style="top:1126.56px;font-size:16.60px;line-height:19.92px;color:#1467c2;white-space:nowrap;font-weight:bold;left:744.00px;">O-00037</div>
<div class="abs" style="top:1148.96px;font-size:14.60px;line-height:17.52px;color:#000;white-space:nowrap;left:744.00px;">Initial</div>
<div class="abs" style="top:1127.72px;font-size:14.00px;line-height:16.80px;color:#444;white-space:nowrap;right:2848.00px;">May 24, 2023</div>
<div class="abs" style="left:1257.20px;top:1125.32px;width:21.20px;height:21.20px;border:2.00px solid #999;border-radius:3.60px;background:#fff"></div>
<div class="abs" style="left:712.60px;top:1219.84px;width:3.00px;height:42.92px;background:#35b5a5"></div>
<div class="abs" style="top:1196.68px;font-size:16.60px;line-height:19.92px;color:#1467c2;white-space:nowrap;font-weight:bold;left:744.00px;">BI-00000046</div>
<div class="abs" style="top:1219.08px;font-size:14.60px;line-height:17.52px;color:#000;white-space:nowrap;left:744.00px;">New</div>
<div class="abs" style="top:1197.84px;font-size:14.00px;line-height:16.80px;color:#444;white-space:nowrap;right:2848.00px;">May 24, 2023</div>
<div class="abs" style="left:1257.20px;top:1195.44px;width:21.20px;height:21.20px;border:2.00px solid #999;border-radius:3.60px;background:#fff"></div>
<div class="abs" style="left:712.60px;top:1289.96px;width:3.00px;height:42.92px;background:#35b5a5"></div>
<div class="abs" style="top:1266.80px;font-size:16.60px;line-height:19.92px;color:#1467c2;white-space:nowrap;font-weight:bold;left:744.00px;">BI-00000045</div>
<div class="abs" style="top:1289.20px;font-size:14.60px;line-height:17.52px;color:#000;white-space:nowrap;left:744.00px;">Completed</div>
<div class="abs" style="top:1267.96px;font-size:14.00px;line-height:16.80px;color:#444;white-space:nowrap;right:2848.00px;">May 24, 2023</div>
<div class="abs" style="left:1257.20px;top:1265.56px;width:21.20px;height:21.20px;border:2.00px solid #999;border-radius:3.60px;background:#fff"></div>
<div class="abs" style="left:712.60px;top:1360.08px;width:3.00px;height:42.92px;background:#35b5a5"></div>
<div class="abs" style="top:1336.92px;font-size:16.60px;line-height:19.92px;color:#1467c2;white-space:nowrap;font-weight:bold;left:744.00px;">BI-00000044</div>
<div class="abs" style="top:1359.32px;font-size:14.60px;line-height:17.52px;color:#000;white-space:nowrap;left:744.00px;">New</div>
<div class="abs" style="top:1338.08px;font-size:14.00px;line-height:16.80px;color:#444;white-space:nowrap;right:2848.00px;">May 21, 2023</div>
<div class="abs" style="left:1257.20px;top:1335.68px;width:21.20px;height:21.20px;border:2.00px solid #999;border-radius:3.60px;background:#fff"></div>
<div class="abs" style="left:712.60px;top:1430.20px;width:3.00px;height:42.92px;background:#3d6e60"></div>
<div class="abs" style="top:1407.04px;font-size:16.60px;line-height:19.92px;color:#1467c2;white-space:nowrap;font-weight:bold;left:744.00px;">O-00036</div>
<div class="abs" style="top:1429.44px;font-size:14.60px;line-height:17.52px;color:#000;white-space:nowrap;left:744.00px;">Initial</div>
<div class="abs" style="top:1408.20px;font-size:14.00px;line-height:16.80px;color:#444;white-space:nowrap;right:2848.00px;">May 12, 2023</div>
<div class="abs" style="left:1257.20px;top:1405.80px;width:21.20px;height:21.20px;border:2.00px solid #999;border-radius:3.60px;background:#fff"></div>
<div class="abs" style="left:712.60px;top:1500.32px;width:3.00px;height:42.92px;background:#3d6e60"></div>
<div class="abs" style="top:1477.16px;font-size:16.60px;line-height:19.92px;color:#1467c2;white-space:nowrap;font-weight:bold;left:744.00px;">O-00035</div>
<div class="abs" style="top:1499.56px;font-size:14.60px;line-height:17.52px;color:#000;white-space:nowrap;left:744.00px;">Initial</div>
<div class="abs" style="top:1478.32px;font-size:14.00px;line-height:16.80px;color:#444;white-space:nowrap;right:2848.00px;">May 12, 2023</div>
<div class="abs" style="left:1257.20px;top:1475.92px;width:21.20px;height:21.20px;border:2.00px solid #999;border-radius:3.60px;background:#fff"></div>
<div class="abs" style="left:712.60px;top:1570.44px;width:3.00px;height:42.92px;background:#3d6e60"></div>
<div class="abs" style="top:1547.28px;font-size:16.60px;line-height:19.92px;color:#1467c2;white-space:nowrap;font-weight:bold;left:744.00px;">O-00034</div>
<div class="abs" style="top:1569.68px;font-size:14.60px;line-height:17.52px;color:#000;white-space:nowrap;left:744.00px;">Initial</div>
<div class="abs" style="top:1548.44px;font-size:14.00px;line-height:16.80px;color:#444;white-space:nowrap;right:2848.00px;">May 12, 2023</div>
<div class="abs" style="left:1257.20px;top:1546.04px;width:21.20px;height:21.20px;border:2.00px solid #999;border-radius:3.60px;background:#fff"></div>
<div class="abs" style="left:712.60px;top:1640.56px;width:3.00px;height:42.92px;background:#35b5a5"></div>
<div class="abs" style="top:1617.40px;font-size:16.60px;line-height:19.92px;color:#1467c2;white-space:nowrap;font-weight:bold;left:744.00px;">BI-00000042</div>
<div class="abs" style="top:1639.80px;font-size:14.60px;line-height:17.52px;color:#000;white-space:nowrap;left:744.00px;">New</div>
<div class="abs" style="top:1618.56px;font-size:14.00px;line-height:16.80px;color:#444;white-space:nowrap;right:2848.00px;">May 11, 2023</div>
<div class="abs" style="left:1257.20px;top:1616.16px;width:21.20px;height:21.20px;border:2.00px solid #999;border-radius:3.60px;background:#fff"></div>
<div class="abs" style="left:712.60px;top:1710.68px;width:3.00px;height:42.92px;background:#35b5a5"></div>
<div class="abs" style="top:1687.52px;font-size:16.60px;line-height:19.92px;color:#1467c2;white-space:nowrap;font-weight:bold;left:744.00px;">BI-00000041</div>
<div class="abs" style="top:1709.92px;font-size:14.60px;line-height:17.52px;color:#000;white-space:nowrap;left:744.00px;">Completed</div>
<div class="abs" style="top:1688.68px;font-size:14.00px;line-height:16.80px;color:#444;white-space:nowrap;right:2848.00px;">May 11, 2023</div>
<div class="abs" style="left:1257.20px;top:1686.28px;width:21.20px;height:21.20px;border:2.00px solid #999;border-radius:3.60px;background:#fff"></div>
<div class="abs" style="left:712.60px;top:1780.80px;width:3.00px;height:42.92px;background:#35b5a5"></div>
<div class="abs" style="top:1757.64px;font-size:16.60px;line-height:19.92px;color:#1467c2;white-space:nowrap;font-weight:bold;left:744.00px;">BI-00000040</div>
<div class="abs" style="top:1780.04px;font-size:14.60px;line-height:17.52px;color:#000;white-space:nowrap;left:744.00px;">Completed</div>
<div class="abs" style="top:1758.80px;font-size:14.00px;line-height:16.80px;color:#444;white-space:nowrap;right:2848.00px;">May 11, 2023</div>
<div class="abs" style="left:1257.20px;top:1756.40px;width:21.20px;height:21.20px;border:2.00px solid #999;border-radius:3.60px;background:#fff"></div>
<div class="abs" style="left:712.60px;top:1850.92px;width:3.00px;height:12.00px;background:#35b5a5"></div>
<div class="abs" style="top:1827.76px;font-size:16.60px;line-height:19.92px;color:#1467c2;white-space:nowrap;font-weight:bold;left:744.00px;">BI-00000039</div>
<div class="abs" style="top:1850.16px;font-size:14.60px;line-height:17.52px;color:#000;white-space:nowrap;left:744.00px;">Completed</div>
<div class="abs" style="top:1828.92px;font-size:14.00px;line-height:16.80px;color:#444;white-space:nowrap;right:2848.00px;">May 11, 2023</div>
<div class="abs" style="left:1257.20px;top:1826.52px;width:21.20px;height:21.20px;border:2.00px solid #999;border-radius:3.60px;background:#fff"></div>
<div class="abs" style="left:1352.00px;top:488.00px;width:1398.00px;height:166.00px;background:#fff;border-radius:4.80px;"></div>
<div class="abs" style="top:507.04px;font-size:17.60px;line-height:21.12px;color:#111;white-space:nowrap;font-weight:bold;left:1412.80px;">Action Launcher</div>
<div class="abs" style="left:1370.40px;top:546.00px;width:1360.00px;height:33.20px;border:2.40px solid #c6c6c6;border-radius:4.80px;background:#fff"></div>
<div class="abs" style="top:554.32px;font-size:14.80px;line-height:17.76px;color:#666;white-space:nowrap;left:1408.00px;">Search actions...</div>
<div class="abs" style="left:1372.00px;top:594.00px;width:88.00px;height:32.40px;background:#0b6fcb;border-radius:4.80px"></div>
<div class="abs" style="top:601.52px;font-size:14.80px;line-height:17.76px;color:#fff;white-space:nowrap;font-weight:bold;left:1016.00px;width:800px;text-align:center;">New Case</div>
<div class="abs" style="left:1471.20px;top:594.00px;width:86.00px;height:32.40px;background:#0b6fcb;border-radius:4.80px"></div>
<div class="abs" style="top:601.52px;font-size:14.80px;line-height:17.76px;color:#fff;white-space:nowrap;font-weight:bold;left:1114.40px;width:800px;text-align:center;">New Task</div>
<div class="abs" style="left:1352.00px;top:668.40px;width:1398.00px;height:162.00px;background:#fff;border-radius:4.80px;"></div>
<div class="abs" style="top:685.28px;font-size:17.20px;line-height:20.64px;color:#111;white-space:nowrap;font-weight:bold;left:1399.20px;">Alerts (0)</div>
<div class="abs" style="top:767.20px;font-size:14.00px;line-height:16.80px;color:#777;white-space:nowrap;font-weight:bold;left:2051.20px;">No Alerts to Display</div>
<div class="abs" style="left:1352.00px;top:854.40px;width:1398.00px;height:1033.60px;background:#fff;border-radius:4.80px;border-bottom-left-radius:0;border-bottom-right-radius:0;"></div>
<div class="abs" style="top:882.72px;font-size:14.80px;line-height:17.76px;color:#555;white-space:nowrap;left:1384.80px;">Details</div>
<div class="abs" style="top:882.72px;font-size:14.80px;line-height:17.76px;color:#111;white-space:nowrap;font-weight:bold;left:1458.40px;">Advanced Orders</div>
<div class="abs" style="left:1373.60px;top:912.00px;width:1356.00px;height:2.00px;background:#dcdcdc"></div>
<div class="abs" style="left:1445.60px;top:908.80px;width:149.60px;height:4.00px;background:#3d86d8"></div>
<div class="abs" style="left:1373.60px;top:926.40px;width:1355.20px;height:961.60px;background:#fff;border:2.00px solid #d8dde6;border-radius:4.80px"></div>
<div class="abs" style="left:1374.80px;top:927.60px;width:1352.80px;height:66.00px;background:#e9f3fd"></div>
<div class="abs" style="top:949.32px;font-size:17.80px;line-height:21.36px;color:#111;white-space:nowrap;font-weight:bold;left:1440.00px;">Advanced Orders</div>
<div class="abs" style="left:2642.00px;top:943.20px;width:68.00px;height:33.20px;border:2.40px solid #9cc3ea;border-radius:5.20px;background:#fff"></div>
<div class="abs" style="top:951.76px;font-size:14.40px;line-height:17.28px;color:#444;white-space:nowrap;font-weight:bold;left:2676.00px;">New</div>
<div class="abs" style="left:1374.80px;top:994.00px;width:1353.20px;height:33.20px;background:#f3f3f3;border-top:1.60px solid #ddd;border-bottom:1.60px solid #ddd"></div>
<div class="abs" style="top:1001.80px;font-size:15.00px;line-height:18.00px;color:#222;white-space:nowrap;font-weight:bold;left:1382.80px;">Name</div>
<div class="abs" style="top:1001.80px;font-size:15.00px;line-height:18.00px;color:#222;white-space:nowrap;font-weight:bold;left:1607.20px;">Order Date</div>
<div class="abs" style="left:1598.40px;top:995.60px;width:2.00px;height:30.40px;background:#cfcfcf"></div>
<div class="abs" style="top:1001.80px;font-size:15.00px;line-height:18.00px;color:#222;white-space:nowrap;font-weight:bold;left:1833.20px;">Phase</div>
<div class="abs" style="left:1824.40px;top:995.60px;width:2.00px;height:30.40px;background:#cfcfcf"></div>
<div class="abs" style="top:1001.80px;font-size:15.00px;line-height:18.00px;color:#222;white-space:nowrap;font-weight:bold;left:2058.00px;">Value(Receipt)</div>
<div class="abs" style="left:2049.20px;top:995.60px;width:2.00px;height:30.40px;background:#cfcfcf"></div>
<div class="abs" style="top:1001.80px;font-size:15.00px;line-height:18.00px;color:#222;white-space:nowrap;font-weight:bold;left:2281.60px;">Delivery Date</div>
<div class="abs" style="left:2272.80px;top:995.60px;width:2.00px;height:30.40px;background:#cfcfcf"></div>
<div class="abs" style="top:1001.80px;font-size:15.00px;line-height:18.00px;color:#222;white-space:nowrap;font-weight:bold;left:2507.20px;">Currency</div>
<div class="abs" style="left:2498.40px;top:995.60px;width:2.00px;height:30.40px;background:#cfcfcf"></div>
<div class="abs" style="top:1035.44px;font-size:15.60px;line-height:18.72px;color:#0b66c0;white-space:nowrap;left:1382.80px;">O-00039</div>
<div class="abs" style="top:1035.44px;font-size:15.60px;line-height:18.72px;color:#222;white-space:nowrap;left:1607.20px;">2023-06-02</div>
<div class="abs" style="top:1035.92px;font-size:14.80px;line-height:17.76px;color:#222;white-space:nowrap;left:1833.20px;">Initial</div>
<div class="abs" style="top:1035.92px;font-size:14.80px;line-height:17.76px;color:#222;white-space:nowrap;left:2058.00px;">118.21</div>
<div class="abs" style="top:1035.44px;font-size:15.60px;line-height:18.72px;color:#222;white-space:nowrap;left:2281.60px;">2023-06-02</div>
<div class="abs" style="top:1035.92px;font-size:14.80px;line-height:17.76px;color:#222;white-space:nowrap;left:2507.20px;">USD</div>
<div class="abs" style="left:1374.80px;top:1059.83px;width:1353.20px;height:1.60px;background:#ececec"></div>
<div class="abs" style="top:1067.10px;font-size:15.60px;line-height:18.72px;color:#0b66c0;white-space:nowrap;left:1382.80px;">O-00038</div>
<div class="abs" style="top:1067.10px;font-size:15.60px;line-height:18.72px;color:#222;white-space:nowrap;left:1607.20px;">2023-06-01</div>
<div class="abs" style="top:1067.58px;font-size:14.80px;line-height:17.76px;color:#222;white-space:nowrap;left:1833.20px;">Ready</div>
<div class="abs" style="top:1067.58px;font-size:14.80px;line-height:17.76px;color:#222;white-space:nowrap;left:2058.00px;">113.26</div>
<div class="abs" style="top:1067.10px;font-size:15.60px;line-height:18.72px;color:#222;white-space:nowrap;left:2281.60px;">2023-06-01</div>
<div class="abs" style="top:1067.58px;font-size:14.80px;line-height:17.76px;color:#222;white-space:nowrap;left:2507.20px;">USD</div>
<div class="abs" style="left:1374.80px;top:1091.49px;width:1353.20px;height:1.60px;background:#ececec"></div>
<div class="abs" style="top:1098.76px;font-size:15.60px;line-height:18.72px;color:#0b66c0;white-space:nowrap;left:1382.80px;">O-00037</div>
<div class="abs" style="top:1098.76px;font-size:15.60px;line-height:18.72px;color:#222;white-space:nowrap;left:1607.20px;">2023-05-24</div>
<div class="abs" style="top:1099.24px;font-size:14.80px;line-height:17.76px;color:#222;white-space:nowrap;left:1833.20px;">Initial</div>
<div class="abs" style="top:1099.24px;font-size:14.80px;line-height:17.76px;color:#222;white-space:nowrap;left:2058.00px;">0</div>
<div class="abs" style="top:1098.76px;font-size:15.60px;line-height:18.72px;color:#222;white-space:nowrap;left:2281.60px;">2023-05-24</div>
<div class="abs" style="top:1099.24px;font-size:14.80px;line-height:17.76px;color:#222;white-space:nowrap;left:2507.20px;">USD</div>
<div class="abs" style="left:1374.80px;top:1123.15px;width:1353.20px;height:1.60px;background:#ececec"></div>
<div class="abs" style="top:1130.42px;font-size:15.60px;line-height:18.72px;color:#0b66c0;white-space:nowrap;left:1382.80px;">O-00036</div>
<div class="abs" style="top:1130.42px;font-size:15.60px;line-height:18.72px;color:#222;white-space:nowrap;left:1607.20px;">2023-05-12</div>
<div class="abs" style="top:1130.90px;font-size:14.80px;line-height:17.76px;color:#222;white-space:nowrap;left:1833.20px;">Initial</div>
<div class="abs" style="top:1130.90px;font-size:14.80px;line-height:17.76px;color:#222;white-space:nowrap;left:2058.00px;">0</div>
<div class="abs" style="top:1130.42px;font-size:15.60px;line-height:18.72px;color:#222;white-space:nowrap;left:2281.60px;">2023-05-12</div>
<div class="abs" style="top:1130.90px;font-size:14.80px;line-height:17.76px;color:#222;white-space:nowrap;left:2507.20px;">USD</div>
<div class="abs" style="left:1374.80px;top:1154.81px;width:1353.20px;height:1.60px;background:#ececec"></div>
<div class="abs" style="top:1162.08px;font-size:15.60px;line-height:18.72px;color:#0b66c0;white-space:nowrap;left:1382.80px;">O-00035</div>
<div class="abs" style="top:1162.08px;font-size:15.60px;line-height:18.72px;color:#222;white-space:nowrap;left:1607.20px;">2023-05-12</div>
<div class="abs" style="top:1162.56px;font-size:14.80px;line-height:17.76px;color:#222;white-space:nowrap;left:1833.20px;">Initial</div>
<div class="abs" style="top:1162.56px;font-size:14.80px;line-height:17.76px;color:#222;white-space:nowrap;left:2058.00px;">0</div>
<div class="abs" style="top:1162.08px;font-size:15.60px;line-height:18.72px;color:#222;white-space:nowrap;left:2281.60px;">2023-05-12</div>
<div class="abs" style="top:1162.56px;font-size:14.80px;line-height:17.76px;color:#222;white-space:nowrap;left:2507.20px;">USD</div>
<div class="abs" style="left:1374.80px;top:1186.47px;width:1353.20px;height:1.60px;background:#ececec"></div>
<div class="abs" style="top:1193.74px;font-size:15.60px;line-height:18.72px;color:#0b66c0;white-space:nowrap;left:1382.80px;">O-00034</div>
<div class="abs" style="top:1193.74px;font-size:15.60px;line-height:18.72px;color:#222;white-space:nowrap;left:1607.20px;">2023-05-12</div>
<div class="abs" style="top:1194.22px;font-size:14.80px;line-height:17.76px;color:#222;white-space:nowrap;left:1833.20px;">Initial</div>
<div class="abs" style="top:1194.22px;font-size:14.80px;line-height:17.76px;color:#222;white-space:nowrap;left:2058.00px;">0</div>
<div class="abs" style="top:1193.74px;font-size:15.60px;line-height:18.72px;color:#222;white-space:nowrap;left:2281.60px;">2023-05-12</div>
<div class="abs" style="top:1194.22px;font-size:14.80px;line-height:17.76px;color:#222;white-space:nowrap;left:2507.20px;">USD</div>
<div class="abs" style="left:1374.80px;top:1218.13px;width:1353.20px;height:1.60px;background:#ececec"></div>
<div class="abs" style="top:1225.40px;font-size:15.60px;line-height:18.72px;color:#0b66c0;white-space:nowrap;left:1382.80px;">O-00033</div>
<div class="abs" style="top:1225.40px;font-size:15.60px;line-height:18.72px;color:#222;white-space:nowrap;left:1607.20px;">2023-05-04</div>
<div class="abs" style="top:1225.88px;font-size:14.80px;line-height:17.76px;color:#222;white-space:nowrap;left:1833.20px;">Initial</div>
<div class="abs" style="top:1225.88px;font-size:14.80px;line-height:17.76px;color:#222;white-space:nowrap;left:2058.00px;">0</div>
<div class="abs" style="top:1225.40px;font-size:15.60px;line-height:18.72px;color:#222;white-space:nowrap;left:2281.60px;">2023-05-04</div>
<div class="abs" style="top:1225.88px;font-size:14.80px;line-height:17.76px;color:#222;white-space:nowrap;left:2507.20px;">USD</div>
<div class="abs" style="left:1374.80px;top:1249.79px;width:1353.20px;height:1.60px;background:#ececec"></div>
<div class="abs" style="top:1257.06px;font-size:15.60px;line-height:18.72px;color:#0b66c0;white-space:nowrap;left:1382.80px;">O-00032</div>
<div class="abs" style="top:1257.06px;font-size:15.60px;line-height:18.72px;color:#222;white-space:nowrap;left:1607.20px;">2023-05-04</div>
<div class="abs" style="top:1257.54px;font-size:14.80px;line-height:17.76px;color:#222;white-space:nowrap;left:1833.20px;">Ready</div>
<div class="abs" style="top:1257.54px;font-size:14.80px;line-height:17.76px;color:#222;white-space:nowrap;left:2058.00px;">1891.73</div>
<div class="abs" style="top:1257.06px;font-size:15.60px;line-height:18.72px;color:#222;white-space:nowrap;left:2281.60px;">2023-05-04</div>
<div class="abs" style="top:1257.54px;font-size:14.80px;line-height:17.76px;color:#222;white-space:nowrap;left:2507.20px;">USD</div>
<div class="abs" style="left:1374.80px;top:1281.45px;width:1353.20px;height:1.60px;background:#ececec"></div>
<div class="abs" style="top:1288.72px;font-size:15.60px;line-height:18.72px;color:#0b66c0;white-space:nowrap;left:1382.80px;">O-00031</div>
<div class="abs" style="top:1288.72px;font-size:15.60px;line-height:18.72px;color:#222;white-space:nowrap;left:1607.20px;">2023-05-02</div>
<div class="abs" style="top:1289.20px;font-size:14.80px;line-height:17.76px;color:#222;white-space:nowrap;left:1833.20px;">Initial</div>
<div class="abs" style="top:1289.20px;font-size:14.80px;line-height:17.76px;color:#222;white-space:nowrap;left:2058.00px;">0</div>
<div class="abs" style="top:1288.72px;font-size:15.60px;line-height:18.72px;color:#222;white-space:nowrap;left:2281.60px;">2023-05-02</div>
<div class="abs" style="top:1289.20px;font-size:14.80px;line-height:17.76px;color:#222;white-space:nowrap;left:2507.20px;">USD</div>
<div class="abs" style="left:1374.80px;top:1313.11px;width:1353.20px;height:1.60px;background:#ececec"></div>
<div class="abs" style="top:1320.38px;font-size:15.60px;line-height:18.72px;color:#0b66c0;white-space:nowrap;left:1382.80px;">O-00030</div>
<div class="abs" style="top:1320.38px;font-size:15.60px;line-height:18.72px;color:#222;white-space:nowrap;left:1607.20px;">2023-04-28</div>
<div class="abs" style="top:1320.86px;font-size:14.80px;line-height:17.76px;color:#222;white-space:nowrap;left:1833.20px;">Ready</div>
<div class="abs" style="top:1320.86px;font-size:14.80px;line-height:17.76px;color:#222;white-space:nowrap;left:2058.00px;">675.36</div>
<div class="abs" style="top:1320.38px;font-size:15.60px;line-height:18.72px;color:#222;white-space:nowrap;left:2281.60px;">2023-04-28</div>
<div class="abs" style="top:1320.86px;font-size:14.80px;line-height:17.76px;color:#222;white-space:nowrap;left:2507.20px;">USD</div>
<div class="abs" style="left:1374.80px;top:1344.77px;width:1353.20px;height:1.60px;background:#ececec"></div>
<div class="abs" style="top:1352.04px;font-size:15.60px;line-height:18.72px;color:#0b66c0;white-space:nowrap;left:1382.80px;">O-00029</div>
<div class="abs" style="top:1352.04px;font-size:15.60px;line-height:18.72px;color:#222;white-space:nowrap;left:1607.20px;">2023-04-27</div>
<div class="abs" style="top:1352.52px;font-size:14.80px;line-height:17.76px;color:#222;white-space:nowrap;left:1833.20px;">Initial</div>
<div class="abs" style="top:1352.52px;font-size:14.80px;line-height:17.76px;color:#222;white-space:nowrap;left:2058.00px;">157.06</div>
<div class="abs" style="top:1352.04px;font-size:15.60px;line-height:18.72px;color:#222;white-space:nowrap;left:2281.60px;">2023-04-27</div>
<div class="abs" style="top:1352.52px;font-size:14.80px;line-height:17.76px;color:#222;white-space:nowrap;left:2507.20px;">USD</div>
<div class="abs" style="left:1374.80px;top:1376.43px;width:1353.20px;height:1.60px;background:#ececec"></div>
<div class="abs" style="top:1383.70px;font-size:15.60px;line-height:18.72px;color:#0b66c0;white-space:nowrap;left:1382.80px;">O-00028</div>
<div class="abs" style="top:1383.70px;font-size:15.60px;line-height:18.72px;color:#222;white-space:nowrap;left:1607.20px;">2023-04-27</div>
<div class="abs" style="top:1384.18px;font-size:14.80px;line-height:17.76px;color:#222;white-space:nowrap;left:1833.20px;">Initial</div>
<div class="abs" style="top:1384.18px;font-size:14.80px;line-height:17.76px;color:#222;white-space:nowrap;left:2058.00px;">63.51</div>
<div class="abs" style="top:1383.70px;font-size:15.60px;line-height:18.72px;color:#222;white-space:nowrap;left:2281.60px;">2023-04-27</div>
<div class="abs" style="top:1384.18px;font-size:14.80px;line-height:17.76px;color:#222;white-space:nowrap;left:2507.20px;">USD</div>
<div class="abs" style="left:1374.80px;top:1408.09px;width:1353.20px;height:1.60px;background:#ececec"></div>
<div class="abs" style="top:1415.36px;font-size:15.60px;line-height:18.72px;color:#0b66c0;white-space:nowrap;left:1382.80px;">O-00027</div>
<div class="abs" style="top:1415.36px;font-size:15.60px;line-height:18.72px;color:#222;white-space:nowrap;left:1607.20px;">2023-04-27</div>
<div class="abs" style="top:1415.84px;font-size:14.80px;line-height:17.76px;color:#222;white-space:nowrap;left:1833.20px;">Initial</div>
<div class="abs" style="top:1415.84px;font-size:14.80px;line-height:17.76px;color:#222;white-space:nowrap;left:2058.00px;">13.14</div>
<div class="abs" style="top:1415.36px;font-size:15.60px;line-height:18.72px;color:#222;white-space:nowrap;left:2281.60px;">2023-04-27</div>
<div class="abs" style="top:1415.84px;font-size:14.80px;line-height:17.76px;color:#222;white-space:nowrap;left:2507.20px;">USD</div>
<div class="abs" style="left:1374.80px;top:1439.75px;width:1353.20px;height:1.60px;background:#ececec"></div>
<div class="abs" style="top:1447.02px;font-size:15.60px;line-height:18.72px;color:#0b66c0;white-space:nowrap;left:1382.80px;">O-00026</div>
<div class="abs" style="top:1447.02px;font-size:15.60px;line-height:18.72px;color:#222;white-space:nowrap;left:1607.20px;">2023-04-26</div>
<div class="abs" style="top:1447.50px;font-size:14.80px;line-height:17.76px;color:#222;white-space:nowrap;left:1833.20px;">Initial</div>
<div class="abs" style="top:1447.50px;font-size:14.80px;line-height:17.76px;color:#222;white-space:nowrap;left:2058.00px;">199.5</div>
<div class="abs" style="top:1447.02px;font-size:15.60px;line-height:18.72px;color:#222;white-space:nowrap;left:2281.60px;">2023-04-26</div>
<div class="abs" style="top:1447.50px;font-size:14.80px;line-height:17.76px;color:#222;white-space:nowrap;left:2507.20px;">USD</div>
<div class="abs" style="left:1374.80px;top:1471.41px;width:1353.20px;height:1.60px;background:#ececec"></div>
<div class="abs" style="top:1478.68px;font-size:15.60px;line-height:18.72px;color:#0b66c0;white-space:nowrap;left:1382.80px;">O-00025</div>
<div class="abs" style="top:1478.68px;font-size:15.60px;line-height:18.72px;color:#222;white-space:nowrap;left:1607.20px;">2023-04-26</div>
<div class="abs" style="top:1479.16px;font-size:14.80px;line-height:17.76px;color:#222;white-space:nowrap;left:1833.20px;">Ready</div>
<div class="abs" style="top:1479.16px;font-size:14.80px;line-height:17.76px;color:#222;white-space:nowrap;left:2058.00px;">728.23</div>
<div class="abs" style="top:1478.68px;font-size:15.60px;line-height:18.72px;color:#222;white-space:nowrap;left:2281.60px;">2023-04-26</div>
<div class="abs" style="top:1479.16px;font-size:14.80px;line-height:17.76px;color:#222;white-space:nowrap;left:2507.20px;">USD</div>
<div class="abs" style="left:1374.80px;top:1503.07px;width:1353.20px;height:1.60px;background:#ececec"></div>
<div class="abs" style="top:1510.34px;font-size:15.60px;line-height:18.72px;color:#0b66c0;white-space:nowrap;left:1382.80px;">O-00021</div>
<div class="abs" style="top:1510.34px;font-size:15.60px;line-height:18.72px;color:#222;white-space:nowrap;left:1607.20px;">2023-04-25</div>
<div class="abs" style="top:1510.82px;font-size:14.80px;line-height:17.76px;color:#222;white-space:nowrap;left:1833.20px;">Ready</div>
<div class="abs" style="top:1510.82px;font-size:14.80px;line-height:17.76px;color:#222;white-space:nowrap;left:2058.00px;">725.96</div>
<div class="abs" style="top:1510.34px;font-size:15.60px;line-height:18.72px;color:#222;white-space:nowrap;left:2281.60px;">2023-04-25</div>
<div class="abs" style="top:1510.82px;font-size:14.80px;line-height:17.76px;color:#222;white-space:nowrap;left:2507.20px;">USD</div>
<div class="abs" style="left:1374.80px;top:1534.73px;width:1353.20px;height:1.60px;background:#ececec"></div>
<div class="abs" style="top:1542.00px;font-size:15.60px;line-height:18.72px;color:#0b66c0;white-space:nowrap;left:1382.80px;">O-00017</div>
<div class="abs" style="top:1542.00px;font-size:15.60px;line-height:18.72px;color:#222;white-space:nowrap;left:1607.20px;">2023-04-25</div>
<div class="abs" style="top:1542.48px;font-size:14.80px;line-height:17.76px;color:#222;white-space:nowrap;left:1833.20px;">Initial</div>
<div class="abs" style="top:1542.48px;font-size:14.80px;line-height:17.76px;color:#222;white-space:nowrap;left:2058.00px;">13</div>
<div class="abs" style="top:1542.00px;font-size:15.60px;line-height:18.72px;color:#222;white-space:nowrap;left:2281.60px;">2023-04-25</div>
<div class="abs" style="top:1542.48px;font-size:14.80px;line-height:17.76px;color:#222;white-space:nowrap;left:2507.20px;">USD</div>
<div class="abs" style="left:1374.80px;top:1566.39px;width:1353.20px;height:1.60px;background:#ececec"></div>
<div class="abs" style="top:1573.66px;font-size:15.60px;line-height:18.72px;color:#0b66c0;white-space:nowrap;left:1382.80px;">O-00016</div>
<div class="abs" style="top:1573.66px;font-size:15.60px;line-height:18.72px;color:#222;white-space:nowrap;left:1607.20px;">2023-04-25</div>
<div class="abs" style="top:1574.14px;font-size:14.80px;line-height:17.76px;color:#222;white-space:nowrap;left:1833.20px;">Ready</div>
<div class="abs" style="top:1574.14px;font-size:14.80px;line-height:17.76px;color:#222;white-space:nowrap;left:2058.00px;">169.23</div>
<div class="abs" style="top:1573.66px;font-size:15.60px;line-height:18.72px;color:#222;white-space:nowrap;left:2281.60px;">2023-04-25</div>
<div class="abs" style="top:1574.14px;font-size:14.80px;line-height:17.76px;color:#222;white-space:nowrap;left:2507.20px;">USD</div>
<div class="abs" style="left:1374.80px;top:1598.05px;width:1353.20px;height:1.60px;background:#ececec"></div>
<div class="abs" style="top:1605.32px;font-size:15.60px;line-height:18.72px;color:#0b66c0;white-space:nowrap;left:1382.80px;">O-00015</div>
<div class="abs" style="top:1605.32px;font-size:15.60px;line-height:18.72px;color:#222;white-space:nowrap;left:1607.20px;">2023-04-25</div>
<div class="abs" style="top:1605.80px;font-size:14.80px;line-height:17.76px;color:#222;white-space:nowrap;left:1833.20px;">Initial</div>
<div class="abs" style="top:1605.80px;font-size:14.80px;line-height:17.76px;color:#222;white-space:nowrap;left:2058.00px;">6523.3</div>
<div class="abs" style="top:1605.32px;font-size:15.60px;line-height:18.72px;color:#222;white-space:nowrap;left:2281.60px;">2023-04-25</div>
<div class="abs" style="top:1605.80px;font-size:14.80px;line-height:17.76px;color:#222;white-space:nowrap;left:2507.20px;">USD</div>
<div class="abs" style="left:1374.80px;top:1629.71px;width:1353.20px;height:1.60px;background:#ececec"></div>
<div class="abs" style="top:1636.98px;font-size:15.60px;line-height:18.72px;color:#0b66c0;white-space:nowrap;left:1382.80px;">O-00011</div>
<div class="abs" style="top:1636.98px;font-size:15.60px;line-height:18.72px;color:#222;white-space:nowrap;left:1607.20px;">2023-04-25</div>
<div class="abs" style="top:1637.46px;font-size:14.80px;line-height:17.76px;color:#222;white-space:nowrap;left:1833.20px;">Initial</div>
<div class="abs" style="top:1637.46px;font-size:14.80px;line-height:17.76px;color:#222;white-space:nowrap;left:2058.00px;">502.87</div>
<div class="abs" style="top:1636.98px;font-size:15.60px;line-height:18.72px;color:#222;white-space:nowrap;left:2281.60px;">2023-04-25</div>
<div class="abs" style="top:1637.46px;font-size:14.80px;line-height:17.76px;color:#222;white-space:nowrap;left:2507.20px;">USD</div>
<div class="abs" style="left:1374.80px;top:1661.37px;width:1353.20px;height:1.60px;background:#ececec"></div>
<div class="abs" style="top:1668.64px;font-size:15.60px;line-height:18.72px;color:#0b66c0;white-space:nowrap;left:1382.80px;">O-00009</div>
<div class="abs" style="top:1668.64px;font-size:15.60px;line-height:18.72px;color:#222;white-space:nowrap;left:1607.20px;">2023-04-25</div>
<div class="abs" style="top:1669.12px;font-size:14.80px;line-height:17.76px;color:#222;white-space:nowrap;left:1833.20px;">Initial</div>
<div class="abs" style="top:1669.12px;font-size:14.80px;line-height:17.76px;color:#222;white-space:nowrap;left:2058.00px;">11.73</div>
<div class="abs" style="top:1668.64px;font-size:15.60px;line-height:18.72px;color:#222;white-space:nowrap;left:2281.60px;">2023-04-25</div>
<div class="abs" style="top:1669.12px;font-size:14.80px;line-height:17.76px;color:#222;white-space:nowrap;left:2507.20px;">USD</div>
<div class="abs" style="left:1374.80px;top:1693.03px;width:1353.20px;height:1.60px;background:#ececec"></div>
<div class="abs" style="top:1700.30px;font-size:15.60px;line-height:18.72px;color:#0b66c0;white-space:nowrap;left:1382.80px;">O-00008</div>
<div class="abs" style="top:1700.30px;font-size:15.60px;line-height:18.72px;color:#222;white-space:nowrap;left:1607.20px;">2023-04-25</div>
<div class="abs" style="top:1700.78px;font-size:14.80px;line-height:17.76px;color:#222;white-space:nowrap;left:1833.20px;">Ready</div>
<div class="abs" style="top:1700.78px;font-size:14.80px;line-height:17.76px;color:#222;white-space:nowrap;left:2058.00px;">1535.8</div>
<div class="abs" style="top:1700.30px;font-size:15.60px;line-height:18.72px;color:#222;white-space:nowrap;left:2281.60px;">2023-04-25</div>
<div class="abs" style="top:1700.78px;font-size:14.80px;line-height:17.76px;color:#222;white-space:nowrap;left:2507.20px;">USD</div>
<div class="abs" style="left:1374.80px;top:1724.69px;width:1353.20px;height:1.60px;background:#ececec"></div>
<div class="abs" style="top:1731.96px;font-size:15.60px;line-height:18.72px;color:#0b66c0;white-space:nowrap;left:1382.80px;">O-00004</div>
<div class="abs" style="top:1731.96px;font-size:15.60px;line-height:18.72px;color:#222;white-space:nowrap;left:1607.20px;">2023-04-25</div>
<div class="abs" style="top:1732.44px;font-size:14.80px;line-height:17.76px;color:#222;white-space:nowrap;left:1833.20px;">Initial</div>
<div class="abs" style="top:1732.44px;font-size:14.80px;line-height:17.76px;color:#222;white-space:nowrap;left:2058.00px;">189.54</div>
<div class="abs" style="top:1731.96px;font-size:15.60px;line-height:18.72px;color:#222;white-space:nowrap;left:2281.60px;">2023-04-25</div>
<div class="abs" style="top:1732.44px;font-size:14.80px;line-height:17.76px;color:#222;white-space:nowrap;left:2507.20px;">USD</div>
<div class="abs" style="left:1374.80px;top:1756.35px;width:1353.20px;height:1.60px;background:#ececec"></div>
<div class="abs" style="top:1763.62px;font-size:15.60px;line-height:18.72px;color:#0b66c0;white-space:nowrap;left:1382.80px;">O-00003</div>
<div class="abs" style="top:1763.62px;font-size:15.60px;line-height:18.72px;color:#222;white-space:nowrap;left:1607.20px;">2023-04-25</div>
<div class="abs" style="top:1764.10px;font-size:14.80px;line-height:17.76px;color:#222;white-space:nowrap;left:1833.20px;">Initial</div>
<div class="abs" style="top:1764.10px;font-size:14.80px;line-height:17.76px;color:#222;white-space:nowrap;left:2058.00px;">809.99</div>
<div class="abs" style="top:1763.62px;font-size:15.60px;line-height:18.72px;color:#222;white-space:nowrap;left:2281.60px;">2023-04-25</div>
<div class="abs" style="top:1764.10px;font-size:14.80px;line-height:17.76px;color:#222;white-space:nowrap;left:2507.20px;">USD</div>
<div class="abs" style="left:1374.80px;top:1788.01px;width:1353.20px;height:1.60px;background:#ececec"></div>
<div class="abs" style="top:1795.28px;font-size:15.60px;line-height:18.72px;color:#0b66c0;white-space:nowrap;left:1382.80px;">O-00002</div>
<div class="abs" style="top:1795.28px;font-size:15.60px;line-height:18.72px;color:#222;white-space:nowrap;left:1607.20px;">2023-04-25</div>
<div class="abs" style="top:1795.76px;font-size:14.80px;line-height:17.76px;color:#222;white-space:nowrap;left:1833.20px;">Ready</div>
<div class="abs" style="top:1795.76px;font-size:14.80px;line-height:17.76px;color:#222;white-space:nowrap;left:2058.00px;">254.86</div>
<div class="abs" style="top:1795.28px;font-size:15.60px;line-height:18.72px;color:#222;white-space:nowrap;left:2281.60px;">2023-04-25</div>
<div class="abs" style="top:1795.76px;font-size:14.80px;line-height:17.76px;color:#222;white-space:nowrap;left:2507.20px;">USD</div>
<div class="abs" style="left:1374.80px;top:1819.67px;width:1353.20px;height:1.60px;background:#ececec"></div>
<div class="abs" style="top:1826.94px;font-size:15.60px;line-height:18.72px;color:#0b66c0;white-space:nowrap;left:1382.80px;">O-00001</div>
<div class="abs" style="top:1826.94px;font-size:15.60px;line-height:18.72px;color:#222;white-space:nowrap;left:1607.20px;">2023-04-25</div>
<div class="abs" style="top:1827.42px;font-size:14.80px;line-height:17.76px;color:#222;white-space:nowrap;left:1833.20px;">Initial</div>
<div class="abs" style="top:1827.42px;font-size:14.80px;line-height:17.76px;color:#222;white-space:nowrap;left:2058.00px;">0</div>
<div class="abs" style="top:1826.94px;font-size:15.60px;line-height:18.72px;color:#222;white-space:nowrap;left:2281.60px;">2023-04-25</div>
<div class="abs" style="top:1827.42px;font-size:14.80px;line-height:17.76px;color:#222;white-space:nowrap;left:2507.20px;">USD</div>
<div class="abs" style="left:1374.80px;top:1851.33px;width:1353.20px;height:1.60px;background:#ececec"></div>
<div class="abs" style="top:1858.60px;font-size:15.60px;line-height:18.72px;color:#0b66c0;white-space:nowrap;left:1382.80px;">O-00000</div>
<div class="abs" style="top:1858.60px;font-size:15.60px;line-height:18.72px;color:#222;white-space:nowrap;left:1607.20px;">2023-04-25</div>
<div class="abs" style="top:1859.08px;font-size:14.80px;line-height:17.76px;color:#222;white-space:nowrap;left:1833.20px;">Initial</div>
<div class="abs" style="top:1859.08px;font-size:14.80px;line-height:17.76px;color:#222;white-space:nowrap;left:2058.00px;">0</div>
<div class="abs" style="top:1858.60px;font-size:15.60px;line-height:18.72px;color:#222;white-space:nowrap;left:2281.60px;">2023-04-25</div>
<div class="abs" style="top:1859.08px;font-size:14.80px;line-height:17.76px;color:#222;white-space:nowrap;left:2507.20px;">USD</div>
<div class="abs" style="left:1374.80px;top:1882.99px;width:1353.20px;height:1.60px;background:#ececec"></div>
<div class="abs" style="left:2760.80px;top:490.80px;width:668.80px;height:139.20px;background:#fff;border-radius:4.80px;"></div>
<div class="abs" style="top:510.52px;font-size:17.80px;line-height:21.36px;color:#111;white-space:nowrap;font-weight:bold;left:2780.80px;">Knowledge</div>
<div class="abs" style="left:3294.40px;top:504.80px;width:117.20px;height:35.20px;border:2.40px solid #c9c9c9;border-radius:4.80px;background:#fff"></div>
<div class="abs" style="top:514.16px;font-size:14.40px;line-height:17.28px;color:#0b66c0;white-space:nowrap;left:2953.20px;width:800px;text-align:center;">New Article</div>
<div class="abs" style="left:2782.40px;top:554.80px;width:629.20px;height:39.20px;border:2.40px solid #c6c6c6;border-radius:4.80px;background:#fff"></div>
<div class="abs" style="top:565.92px;font-size:14.80px;line-height:17.76px;color:#666;white-space:nowrap;left:2836.00px;">Search Knowledge...</div>
<div class="abs" style="left:2782.40px;top:605.20px;width:629.20px;height:1.60px;background:#e2e2e2"></div>
<div class="abs" style="left:2760.80px;top:643.20px;width:668.80px;height:1244.80px;background:#fff;border-radius:4.80px;border-bottom-left-radius:0;border-bottom-right-radius:0;"></div>
<div class="abs" style="left:2782.40px;top:664.40px;width:48.00px;height:32.00px;border:2.40px solid #c9c9c9;border-radius:4.80px;background:#fff"></div>
<div class="abs" style="left:3033.20px;top:664.40px;width:331.60px;height:32.00px;border:2.40px solid #c4c4c4;border-radius:4.80px;background:#fff"></div>
<div class="abs" style="top:672.16px;font-size:14.40px;line-height:17.28px;color:#666;white-space:nowrap;left:3070.00px;">Search this feed...</div>
<div class="abs" style="left:3374.40px;top:664.40px;width:37.20px;height:32.00px;border:2.40px solid #c9c9c9;border-radius:4.80px;background:#fff"></div>
<div class="abs" style="left:2843.6px;top:739.20px;font-size:15.4px;line-height:18.4px;white-space:nowrap;color:#222"><span style="color:#0b66c0">00001011 — J. Durbin (Admin)</span> created a case.</div>
<div class="abs" style="top:761.20px;font-size:14.00px;line-height:16.80px;color:#444;white-space:nowrap;left:2843.60px;">11m ago</div>
<div class="abs" style="left:3375.20px;top:738.40px;width:21.20px;height:21.20px;border:2.00px solid #999;border-radius:8.00px;background:#fff"></div>
<div class="abs" style="left:2795.60px;top:794.40px;width:597.60px;height:111.60px;border:2.00px solid #e4e4e4;border-radius:5.20px;background:#fff"></div>
<div class="abs" style="left:2796.80px;top:860.80px;width:595.20px;height:1.60px;background:#e5e5e5"></div>
<div class="abs" style="top:819.52px;font-size:14.80px;line-height:17.76px;color:#333;white-space:nowrap;left:2864.40px;">00001011</div>
<div class="abs" style="top:875.12px;font-size:14.80px;line-height:17.76px;color:#0b66c0;white-space:nowrap;left:2696.00px;width:800px;text-align:center;">View more details</div>
<div class="abs" style="top:924.80px;font-size:14.00px;line-height:16.80px;color:#222;white-space:nowrap;left:2795.60px;">1 view</div>
<div class="abs" style="left:2783.60px;top:960.00px;width:628.00px;height:1.60px;background:#e5e5e5"></div>
<div class="abs" style="top:975.36px;font-size:14.40px;line-height:17.28px;color:#111;white-space:nowrap;left:2822.40px;">Like</div>
<div class="abs" style="top:975.36px;font-size:14.40px;line-height:17.28px;color:#111;white-space:nowrap;left:3103.60px;">Comment</div>
<div class="abs" style="left:2783.60px;top:1007.20px;width:628.00px;height:64.80px;background:#f3f3f3;border-top:1.60px solid #e2e2e2;border-bottom:1.60px solid #e2e2e2"></div>
<div class="abs" style="left:2838.40px;top:1023.20px;width:554.80px;height:34.00px;border:2.40px solid #aeaeae;border-radius:5.20px;background:#fff"></div>
<div class="abs" style="top:1032.16px;font-size:14.40px;line-height:17.28px;color:#666;white-space:nowrap;left:2852.00px;">Write a comment...</div>
<div class="abs" style="left:2843.6px;top:1113.80px;font-size:15.4px;line-height:18.4px;white-space:nowrap;color:#222"><span style="color:#0b66c0">00001010 — J. Durbin (Admin)</span> created a case.</div>
<div class="abs" style="top:1135.80px;font-size:14.00px;line-height:16.80px;color:#444;white-space:nowrap;left:2843.60px;">April 21, 2023 at 3:57 PM</div>
<div class="abs" style="left:3375.20px;top:1113.00px;width:21.20px;height:21.20px;border:2.00px solid #999;border-radius:8.00px;background:#fff"></div>
<div class="abs" style="left:2795.60px;top:1169.00px;width:597.60px;height:111.60px;border:2.00px solid #e4e4e4;border-radius:5.20px;background:#fff"></div>
<div class="abs" style="left:2796.80px;top:1235.40px;width:595.20px;height:1.60px;background:#e5e5e5"></div>
<div class="abs" style="top:1194.12px;font-size:14.80px;line-height:17.76px;color:#333;white-space:nowrap;left:2864.40px;">00001010</div>
<div class="abs" style="top:1249.72px;font-size:14.80px;line-height:17.76px;color:#0b66c0;white-space:nowrap;left:2696.00px;width:800px;text-align:center;">View more details</div>
<div class="abs" style="top:1299.40px;font-size:14.00px;line-height:16.80px;color:#222;white-space:nowrap;left:2795.60px;">2 views</div>
<div class="abs" style="left:2783.60px;top:1334.60px;width:628.00px;height:1.60px;background:#e5e5e5"></div>
<div class="abs" style="top:1349.96px;font-size:14.40px;line-height:17.28px;color:#111;white-space:nowrap;left:2822.40px;">Like</div>
<div class="abs" style="top:1349.96px;font-size:14.40px;line-height:17.28px;color:#111;white-space:nowrap;left:3103.60px;">Comment</div>
<div class="abs" style="left:2783.60px;top:1381.80px;width:628.00px;height:64.80px;background:#f3f3f3;border-top:1.60px solid #e2e2e2;border-bottom:1.60px solid #e2e2e2"></div>
<div class="abs" style="left:2838.40px;top:1397.80px;width:554.80px;height:34.00px;border:2.40px solid #aeaeae;border-radius:5.20px;background:#fff"></div>
<div class="abs" style="top:1406.76px;font-size:14.40px;line-height:17.28px;color:#666;white-space:nowrap;left:2852.00px;">Write a comment...</div>
<div class="abs" style="left:2843.6px;top:1488.40px;font-size:15.4px;line-height:18.4px;white-space:nowrap;color:#222"><span style="color:#0b66c0">00001009 — J. Durbin (Admin)</span> created a case.</div>
<div class="abs" style="top:1510.40px;font-size:14.00px;line-height:16.80px;color:#444;white-space:nowrap;left:2843.60px;">April 20, 2023 at 1:08 PM</div>
<div class="abs" style="left:3375.20px;top:1487.60px;width:21.20px;height:21.20px;border:2.00px solid #999;border-radius:8.00px;background:#fff"></div>
<div class="abs" style="left:2795.60px;top:1543.60px;width:597.60px;height:111.60px;border:2.00px solid #e4e4e4;border-radius:5.20px;background:#fff"></div>
<div class="abs" style="left:2796.80px;top:1610.00px;width:595.20px;height:1.60px;background:#e5e5e5"></div>
<div class="abs" style="top:1568.72px;font-size:14.80px;line-height:17.76px;color:#333;white-space:nowrap;left:2864.40px;">00001009</div>
<div class="abs" style="top:1624.32px;font-size:14.80px;line-height:17.76px;color:#0b66c0;white-space:nowrap;left:2696.00px;width:800px;text-align:center;">View more details</div>
<div class="abs" style="top:1674.00px;font-size:14.00px;line-height:16.80px;color:#222;white-space:nowrap;left:2795.60px;">3 views</div>
<div class="abs" style="left:2783.60px;top:1709.20px;width:628.00px;height:1.60px;background:#e5e5e5"></div>
<div class="abs" style="top:1724.56px;font-size:14.40px;line-height:17.28px;color:#111;white-space:nowrap;left:2822.40px;">Like</div>
<div class="abs" style="top:1724.56px;font-size:14.40px;line-height:17.28px;color:#111;white-space:nowrap;left:3103.60px;">Comment</div>
<div class="abs" style="left:2783.60px;top:1756.40px;width:628.00px;height:64.80px;background:#f3f3f3;border-top:1.60px solid #e2e2e2;border-bottom:1.60px solid #e2e2e2"></div>
<div class="abs" style="left:2838.40px;top:1772.40px;width:554.80px;height:34.00px;border:2.40px solid #aeaeae;border-radius:5.20px;background:#fff"></div>
<div class="abs" style="top:1781.36px;font-size:14.40px;line-height:17.28px;color:#666;white-space:nowrap;left:2852.00px;">Write a comment...</div>
<div class="abs" style="top:1885.00px;font-size:14.00px;line-height:16.80px;color:#444;white-space:nowrap;left:2843.60px;">April 20, 2023 at 1:07 PM</div>
<div class="abs" style="left:2843.6px;top:1863.00px;font-size:15.4px;line-height:18.4px;white-space:nowrap;color:#222"><span style="color:#0b66c0">J. Durbin (Admin)</span> updated this record.</div>
<div class="abs" style="left:3375.20px;top:1862.20px;width:21.20px;height:21.20px;border:2.00px solid #999;border-radius:8.00px;background:#fff"></div>
</div>
<svg class="l" viewBox="0 0 1024 576">
<path d="M159.500 472.500 V467.500 H160 Q160 472 164.500 472 V472.500 Z" fill="#f2f4fa"/><path d="M863.700 472.500 V467.500 H863.200 Q863.200 472 858.700 472 V472.500 Z" fill="#f2f4fa"/>
<clipPath id="scr"><rect x="160" y="82" width="703.2" height="390"/></clipPath><g clip-path="url(#scr)">
<circle cx="167.1" cy="89.9" r="5.6" fill="#2f1060"/>
<path d="M165.300 88.700c0-1.700 3.700-1.700 3.700 0.100c0 1.500-3.800 2.100-3.800 3.800h4" fill="none" stroke="#c8a6ea" stroke-width="1.150" stroke-linecap="round" stroke-linejoin="round"/>
<circle cx="452.3" cy="89.6" r="1.3" fill="none" stroke="#666" stroke-width="0.5"/><path d="M453.2 90.6 l1.1 1.1" stroke="#666" stroke-width="0.5"/>
<circle cx="791.900" cy="89.800" r="1.200" fill="#666"/><path d="M796.900 89.300l0.900 1 0.900-1z" fill="#777"/>
<rect x="805" y="87.200" width="5.200" height="5.300" rx="0.8" fill="#5a5a5a"/><path d="M806.200 89.850h2.800M807.600 88.450v2.800" stroke="#fff" stroke-width="0.8"/>
<path d="M813.700 91.900v-1.500l2.100-2.300 2.100 2.300v1.500z" fill="none" stroke="#777" stroke-width="0.7"/><path d="M813.300 92h5.100" stroke="#777" stroke-width="0.8"/>
<circle cx="833.6" cy="90.100" r="1.700" fill="none" stroke="#777" stroke-width="1"/><circle cx="833.6" cy="90.100" r="2.400" fill="none" stroke="#777" stroke-width="0.6" stroke-dasharray="0.8 0.8"/>
<path d="M840.500 91.300c0.900-0.600 0.500-3.500 2.100-3.500s1.200 2.900 2.100 3.500z" fill="#6a6a6a"/><circle cx="842.6" cy="91.900" r="0.600" fill="#6a6a6a"/>
<circle cx="854.700" cy="89.200" r="4.600" fill="#8da1c6"/><path d="M851 87.500l0.600-3 2.200 1.700zM858.400 87.500l-0.600-3-2.200 1.700z" fill="#c9d3e6"/><circle cx="854.700" cy="90.400" r="2.500" fill="#f4f6fb"/><circle cx="854.700" cy="89.200" r="4.600" fill="none" stroke="#b9c5dc" stroke-width="0.5"/>
<rect x="163.60" y="99.40" width="1.5" height="1.3" rx="0.3" fill="#8a8a8a"/>
<rect x="166.15" y="99.40" width="1.5" height="1.3" rx="0.3" fill="#8a8a8a"/>
<rect x="168.70" y="99.40" width="1.5" height="1.3" rx="0.3" fill="#8a8a8a"/>
<rect x="163.60" y="101.55" width="1.5" height="1.3" rx="0.3" fill="#8a8a8a"/>
<rect x="166.15" y="101.55" width="1.5" height="1.3" rx="0.3" fill="#8a8a8a"/>
<rect x="168.70" y="101.55" width="1.5" height="1.3" rx="0.3" fill="#8a8a8a"/>
<rect x="163.60" y="103.70" width="1.5" height="1.3" rx="0.3" fill="#8a8a8a"/>
<rect x="166.15" y="103.70" width="1.5" height="1.3" rx="0.3" fill="#8a8a8a"/>
<rect x="168.70" y="103.70" width="1.5" height="1.3" rx="0.3" fill="#8a8a8a"/>
<path d="M264.6 101.600l1 1 1-1" fill="none" stroke="#888" stroke-width="0.45"/>
<path d="M275 103.6v-3h1.8v3M276.8 103.6v-1.9h1.3v1.9M274.6 103.7h4" fill="none" stroke="#555" stroke-width="0.5"/>
<path d="M320.900 101.800l0.900 0.900 0.900-0.900" fill="none" stroke="#999" stroke-width="0.45"/>
<path d="M326.700 101.500l1.400 1.400M328.100 101.500l-1.400 1.400" stroke="#555" stroke-width="0.5"/>
<path d="M164.6 115.6v-3h1.8v3M166.4 115.6v-1.9h1.3v1.9M164.2 115.7h4" fill="none" stroke="#444" stroke-width="0.5"/>
<path d="M242.400 113.700l0.900 0.900 0.900-0.900" fill="none" stroke="#777" stroke-width="0.5"/>
<path d="M248.1 113.2l1.6 1.6M249.7 113.2l-1.6 1.6" stroke="#777" stroke-width="0.5"/>
<rect x="259.8" y="112.7" width="3.6" height="2.9" rx="0.4" fill="#444"/><path d="M260.9 112.7v-0.8h1.4v0.8" fill="none" stroke="#444" stroke-width="0.5"/>
<path d="M289.800 113.700l0.900 0.900 0.900-0.900" fill="none" stroke="#777" stroke-width="0.5"/>
<path d="M295.4 113.2l1.6 1.6M297 113.2l-1.6 1.6" stroke="#777" stroke-width="0.5"/>
<defs><clipPath id="av1"><circle cx="177.5" cy="135.5" r="10"/></clipPath><clipPath id="av2"><circle cx="177.5" cy="184.5" r="10"/></clipPath></defs>
<g clip-path="url(#av1)"><rect x="167" y="125" width="21" height="21" fill="#b9c7d8"/><rect x="167" y="125" width="21" height="7" fill="#9fb8d6"/><rect x="167" y="138" width="21" height="8" fill="#5a5f66"/><rect x="171" y="129" width="12" height="9" fill="#d9d2cc"/><rect x="174.5" y="129.5" width="5" height="4" fill="#e0523a"/><rect x="167" y="131" width="3" height="12" fill="#4a3a35"/><rect x="172" y="138.5" width="9" height="3.5" fill="#3c4650"/><rect x="183" y="134" width="5" height="4" fill="#e07a3a"/></g>
<g clip-path="url(#av2)"><rect x="167" y="174" width="21" height="21" fill="#8f7a6a"/><rect x="167" y="174" width="21" height="8" fill="#a08d7d"/><ellipse cx="177.3" cy="183" rx="4.3" ry="5.4" fill="#3b2a22"/><path d="M167 195v-3c2-3.5 6-4.5 10.300-4.500s8.300 1 10.300 4.500v3z" fill="#f2f2f2"/><path d="M175.200 187.500l2.100 2.500 2.100-2.500z" fill="#3b2a22"/></g>
<path d="M213.3 135.7a1.35 1.35 0 0 1 1.35 1.35c0 1.100-1.350 2.500-1.350 2.500s-1.350-1.400-1.350-2.500a1.350 1.350 0 0 1 1.350-1.350z" fill="none" stroke="#666" stroke-width="0.55"/>
<path d="M212.2 155.3c0 1.3 1 2.300 2.200 2.300" fill="none" stroke="#777" stroke-width="0.7" stroke-linecap="round"/>
<rect x="212.1" y="163.39999999999998" width="2.2" height="1.6" fill="#888"/>
<path d="M212.2 191.20000000000002c0 1.3 1 2.300 2.200 2.300" fill="none" stroke="#777" stroke-width="0.7" stroke-linecap="round"/>
<rect x="212.39999999999998" y="198.89999999999998" width="1.6" height="2.6" rx="0.3" fill="none" stroke="#888" stroke-width="0.4"/>
<rect x="212.1" y="206.89999999999998" width="2.2" height="1.6" fill="#888"/>
<path d="M213.600 228.400l1.100 1.200 1.100-1.200z" fill="#444"/>
<path d="M319.400 226.700l1.300 1.400 1.300-1.400z" fill="#333"/>
<path d="M297.600 236.900a1.400 1.400 0 1 0 0.300 1.400" fill="none" stroke="#555" stroke-width="0.5"/><path d="M297 236.100h1.200v1.200" fill="none" stroke="#555" stroke-width="0.5"/>
<rect x="303.400" y="236.800" width="3.600" height="2.300" rx="0.3" fill="#555"/><rect x="304.200" y="235.900" width="2" height="1" fill="#777"/>
<path d="M312 236.300h3.800l-1.500 1.800v1.300h-0.800v-1.300z" fill="#444"/>
<path d="M321.400 236.300l3 3" stroke="#666" stroke-width="0.6"/><circle cx="321.500" cy="236.400" r="0.600" fill="#666"/><circle cx="324.300" cy="239.200" r="0.600" fill="#666"/>
<path d="M169.600 265.40l1.100 1.100-1.100 1.100" fill="none" stroke="#777" stroke-width="0.5"/>
<rect x="175" y="263.00" width="7" height="7" rx="0.8" fill="#1f6f5c"/><rect x="176.900" y="264.80" width="3.200" height="3.500" rx="0.4" fill="#cfe9df"/><rect x="177.700" y="264.20" width="1.600" height="0.9" fill="#cfe9df"/>
<path d="M316.100 266.00l0.850 1 0.850-1z" fill="#555"/>
<path d="M169.600 282.93l1.100 1.100-1.100 1.100" fill="none" stroke="#777" stroke-width="0.5"/>
<rect x="175" y="280.53" width="7" height="7" rx="0.8" fill="#1f6f5c"/><rect x="176.900" y="282.33" width="3.200" height="3.500" rx="0.4" fill="#cfe9df"/><rect x="177.700" y="281.73" width="1.600" height="0.9" fill="#cfe9df"/>
<path d="M316.100 283.53l0.850 1 0.850-1z" fill="#555"/>
<path d="M169.600 300.46l1.100 1.100-1.100 1.100" fill="none" stroke="#777" stroke-width="0.5"/>
<rect x="175" y="298.06" width="7" height="7" rx="0.8" fill="#22a596"/><path d="M176.600 299.96h3.800v2.600h-1.700l-1.100 0.900v-0.900h-1z" fill="#e8fbf7"/>
<path d="M316.100 301.06l0.850 1 0.850-1z" fill="#555"/>
<path d="M169.600 317.99l1.100 1.100-1.100 1.100" fill="none" stroke="#777" stroke-width="0.5"/>
<rect x="175" y="315.59" width="7" height="7" rx="0.8" fill="#22a596"/><path d="M176.600 317.49h3.800v2.600h-1.700l-1.100 0.900v-0.900h-1z" fill="#e8fbf7"/>
<path d="M316.100 318.59l0.850 1 0.850-1z" fill="#555"/>
<path d="M169.600 335.52l1.100 1.100-1.100 1.100" fill="none" stroke="#777" stroke-width="0.5"/>
<rect x="175" y="333.12" width="7" height="7" rx="0.8" fill="#22a596"/><path d="M176.600 335.02h3.800v2.600h-1.700l-1.100 0.900v-0.900h-1z" fill="#e8fbf7"/>
<path d="M316.100 336.12l0.850 1 0.850-1z" fill="#555"/>
<path d="M169.600 353.05l1.100 1.100-1.100 1.100" fill="none" stroke="#777" stroke-width="0.5"/>
<rect x="175" y="350.65" width="7" height="7" rx="0.8" fill="#1f6f5c"/><rect x="176.900" y="352.45" width="3.200" height="3.500" rx="0.4" fill="#cfe9df"/><rect x="177.700" y="351.85" width="1.600" height="0.9" fill="#cfe9df"/>
<path d="M316.100 353.65l0.850 1 0.850-1z" fill="#555"/>
<path d="M169.600 370.58l1.100 1.100-1.100 1.100" fill="none" stroke="#777" stroke-width="0.5"/>
<rect x="175" y="368.18" width="7" height="7" rx="0.8" fill="#1f6f5c"/><rect x="176.900" y="369.98" width="3.200" height="3.500" rx="0.4" fill="#cfe9df"/><rect x="177.700" y="369.38" width="1.600" height="0.9" fill="#cfe9df"/>
<path d="M316.100 371.18l0.850 1 0.850-1z" fill="#555"/>
<path d="M169.600 388.11l1.100 1.100-1.100 1.100" fill="none" stroke="#777" stroke-width="0.5"/>
<rect x="175" y="385.71" width="7" height="7" rx="0.8" fill="#1f6f5c"/><rect x="176.900" y="387.51" width="3.200" height="3.500" rx="0.4" fill="#cfe9df"/><rect x="177.700" y="386.91" width="1.600" height="0.9" fill="#cfe9df"/>
<path d="M316.100 388.71l0.850 1 0.850-1z" fill="#555"/>
<path d="M169.600 405.64l1.100 1.100-1.100 1.100" fill="none" stroke="#777" stroke-width="0.5"/>
<rect x="175" y="403.24" width="7" height="7" rx="0.8" fill="#22a596"/><path d="M176.600 405.14h3.800v2.600h-1.700l-1.100 0.900v-0.900h-1z" fill="#e8fbf7"/>
<path d="M316.100 406.24l0.850 1 0.850-1z" fill="#555"/>
<path d="M169.600 423.17l1.100 1.100-1.100 1.100" fill="none" stroke="#777" stroke-width="0.5"/>
<rect x="175" y="420.77" width="7" height="7" rx="0.8" fill="#22a596"/><path d="M176.600 422.67h3.800v2.600h-1.700l-1.100 0.900v-0.900h-1z" fill="#e8fbf7"/>
<path d="M316.100 423.77l0.850 1 0.850-1z" fill="#555"/>
<path d="M169.600 440.70l1.100 1.100-1.100 1.100" fill="none" stroke="#777" stroke-width="0.5"/>
<rect x="175" y="438.30" width="7" height="7" rx="0.8" fill="#22a596"/><path d="M176.600 440.20h3.800v2.600h-1.700l-1.100 0.900v-0.900h-1z" fill="#e8fbf7"/>
<path d="M316.100 441.30l0.850 1 0.850-1z" fill="#555"/>
<path d="M169.600 458.23l1.100 1.100-1.100 1.100" fill="none" stroke="#777" stroke-width="0.5"/>
<rect x="175" y="455.83" width="7" height="7" rx="0.8" fill="#22a596"/><path d="M176.600 457.73h3.800v2.600h-1.700l-1.100 0.900v-0.900h-1z" fill="#e8fbf7"/>
<path d="M316.100 458.83l0.850 1 0.850-1z" fill="#555"/>
<rect x="343.100" y="126.300" width="6.100" height="6.100" rx="0.9" fill="#5f8fdc"/><rect x="345.100" y="127.700" width="2.200" height="3.300" rx="0.3" fill="#eaf2ff"/>
<circle cx="347.700" cy="140.500" r="1.350" fill="none" stroke="#555" stroke-width="0.55"/><path d="M348.600 141.500l1.100 1.100" stroke="#555" stroke-width="0.55"/>
<rect x="341" y="170.900" width="6.200" height="6.200" rx="0.9" fill="#e5566d"/><rect x="342.600" y="172.500" width="3" height="3" rx="0.5" fill="#fde8ec"/>
<path d="M663.500 173.200a1.500 1.500 0 1 0 0.400 1.500" fill="none" stroke="#1b8fe0" stroke-width="0.6"/><path d="M662.900 172.300h1.300v1.300" fill="none" stroke="#1b8fe0" stroke-width="0.6"/>
<rect x="347.600" y="235.400" width="8.900" height="8.900" rx="1.300" fill="#1b82e6"/><rect x="350" y="238" width="4.100" height="4.500" rx="0.5" fill="#e8f4ff"/><rect x="351.200" y="237.100" width="1.700" height="1.300" fill="#e8f4ff"/><rect x="351.300" y="239.400" width="1.500" height="1.700" fill="#1b82e6"/>
<path d="M394.10 252.200l1.100 1.100 1.100-1.100" fill="none" stroke="#666" stroke-width="0.5"/>
<path d="M450.60 252.200l1.100 1.100 1.100-1.100" fill="none" stroke="#666" stroke-width="0.5"/>
<path d="M506.80 252.200l1.100 1.100 1.100-1.100" fill="none" stroke="#666" stroke-width="0.5"/>
<path d="M562.70 252.200l1.100 1.100 1.100-1.100" fill="none" stroke="#666" stroke-width="0.5"/>
<path d="M619.10 252.200l1.100 1.100 1.100-1.100" fill="none" stroke="#666" stroke-width="0.5"/>
<path d="M676.30 252.200l1.100 1.100 1.100-1.100" fill="none" stroke="#666" stroke-width="0.5"/>
<circle cx="702.600" cy="143.400" r="1.200" fill="none" stroke="#666" stroke-width="0.5"/><path d="M703.400 144.300l1 1" stroke="#666" stroke-width="0.5"/>
<path d="M698.300 169.200l1.500 2M698.300 169.200v1M698.300 169.200h1M699.800 171.200v-1M699.800 171.200h-1" stroke="#555" stroke-width="0.45" fill="none"/><path d="M702.900 169.800l0.900 1 0.900-1z" fill="#555"/>
<circle cx="763.700" cy="169.900" r="1.200" fill="none" stroke="#666" stroke-width="0.5"/><path d="M764.500 170.800l1 1" stroke="#666" stroke-width="0.5"/>
<path d="M849 169.300a1.500 1.500 0 1 0 0.400 1.500" fill="none" stroke="#555" stroke-width="0.55"/><path d="M848.400 168.400h1.300v1.300" fill="none" stroke="#555" stroke-width="0.55"/>
<circle cx="703.2" cy="189.2" r="3.7" fill="#d3dcec"/>
<path d="M700.54 186.61l1.11 2.41M705.86 186.61l-1.11 2.41" stroke="#566c96" stroke-width="1.48" stroke-linecap="round"/>
<circle cx="703.2" cy="189.75" r="2.29" fill="#f6f8fc" stroke="#566c96" stroke-width="1.11"/>
<path d="M845.600 186.90l0.850 0.900 0.850-0.900z" fill="#555"/>
<rect x="703.500" y="202.90" width="8.200" height="8.200" rx="1.200" fill="#f2622e"/><rect x="705.400" y="205.40" width="4.400" height="3.600" rx="0.5" fill="#fff1ea"/><path d="M706.500 205.40v-0.900h2.200v0.900" fill="none" stroke="#fff1ea" stroke-width="0.6"/>
<path d="M700.600 247.30v-1.800l1-1.300c0.600 0 0.500 0.700 0.300 1.200h1.100c0.400 0 0.400 1.900-0.200 1.900z" fill="#444"/><rect x="699.800" y="245.40" width="0.700" height="1.900" fill="#444"/>
<ellipse cx="771.100" cy="245.90" rx="1.700" ry="1.500" fill="#444"/><path d="M770 246.90l-0.500 1 1.400-0.600z" fill="#444"/>
<circle cx="703.3" cy="260.2" r="3.3" fill="#d3dcec"/>
<path d="M700.92 257.89l0.99 2.15M705.68 257.89l-0.99 2.15" stroke="#566c96" stroke-width="1.32" stroke-linecap="round"/>
<circle cx="703.3" cy="260.69" r="2.05" fill="#f6f8fc" stroke="#566c96" stroke-width="0.99"/>
<circle cx="703.2" cy="282.85" r="3.7" fill="#d3dcec"/>
<path d="M700.54 280.26l1.11 2.41M705.86 280.26l-1.11 2.41" stroke="#566c96" stroke-width="1.48" stroke-linecap="round"/>
<circle cx="703.2" cy="283.41" r="2.29" fill="#f6f8fc" stroke="#566c96" stroke-width="1.11"/>
<path d="M845.600 280.55l0.850 0.900 0.850-0.900z" fill="#555"/>
<rect x="703.500" y="296.55" width="8.200" height="8.200" rx="1.200" fill="#f2622e"/><rect x="705.400" y="299.05" width="4.400" height="3.600" rx="0.5" fill="#fff1ea"/><path d="M706.500 299.05v-0.900h2.200v0.900" fill="none" stroke="#fff1ea" stroke-width="0.6"/>
<path d="M700.600 340.95v-1.800l1-1.300c0.600 0 0.500 0.700 0.300 1.200h1.100c0.400 0 0.400 1.900-0.200 1.900z" fill="#444"/><rect x="699.800" y="339.05" width="0.700" height="1.900" fill="#444"/>
<ellipse cx="771.100" cy="339.55" rx="1.700" ry="1.500" fill="#444"/><path d="M770 340.55l-0.500 1 1.400-0.600z" fill="#444"/>
<circle cx="703.3" cy="353.85" r="3.3" fill="#d3dcec"/>
<path d="M700.92 351.54l0.99 2.15M705.68 351.54l-0.99 2.15" stroke="#566c96" stroke-width="1.32" stroke-linecap="round"/>
<circle cx="703.3" cy="354.35" r="2.05" fill="#f6f8fc" stroke="#566c96" stroke-width="0.99"/>
<circle cx="703.2" cy="376.5" r="3.7" fill="#d3dcec"/>
<path d="M700.54 373.91l1.11 2.41M705.86 373.91l-1.11 2.41" stroke="#566c96" stroke-width="1.48" stroke-linecap="round"/>
<circle cx="703.2" cy="377.06" r="2.29" fill="#f6f8fc" stroke="#566c96" stroke-width="1.11"/>
<path d="M845.600 374.20l0.850 0.900 0.850-0.900z" fill="#555"/>
<rect x="703.500" y="390.20" width="8.200" height="8.200" rx="1.200" fill="#f2622e"/><rect x="705.400" y="392.70" width="4.400" height="3.600" rx="0.5" fill="#fff1ea"/><path d="M706.500 392.70v-0.900h2.200v0.900" fill="none" stroke="#fff1ea" stroke-width="0.6"/>
<path d="M700.600 434.60v-1.800l1-1.300c0.600 0 0.500 0.700 0.300 1.200h1.100c0.400 0 0.400 1.900-0.200 1.900z" fill="#444"/><rect x="699.800" y="432.70" width="0.700" height="1.900" fill="#444"/>
<ellipse cx="771.100" cy="433.20" rx="1.700" ry="1.500" fill="#444"/><path d="M770 434.20l-0.500 1 1.400-0.600z" fill="#444"/>
<circle cx="703.3" cy="447.5" r="3.3" fill="#d3dcec"/>
<path d="M700.92 445.19l0.99 2.15M705.68 445.19l-0.99 2.15" stroke="#566c96" stroke-width="1.32" stroke-linecap="round"/>
<circle cx="703.3" cy="448.00" r="2.05" fill="#f6f8fc" stroke="#566c96" stroke-width="0.99"/>
<circle cx="703.2" cy="469.65000000000003" r="3.7" fill="#d3dcec"/>
<path d="M700.54 467.06l1.11 2.41M705.86 467.06l-1.11 2.41" stroke="#566c96" stroke-width="1.48" stroke-linecap="round"/>
<circle cx="703.2" cy="470.21" r="2.29" fill="#f6f8fc" stroke="#566c96" stroke-width="1.11"/>
<path d="M845.600 467.85l0.850 0.900 0.850-0.900z" fill="#555"/>
</g></svg></div>
</body></html>
